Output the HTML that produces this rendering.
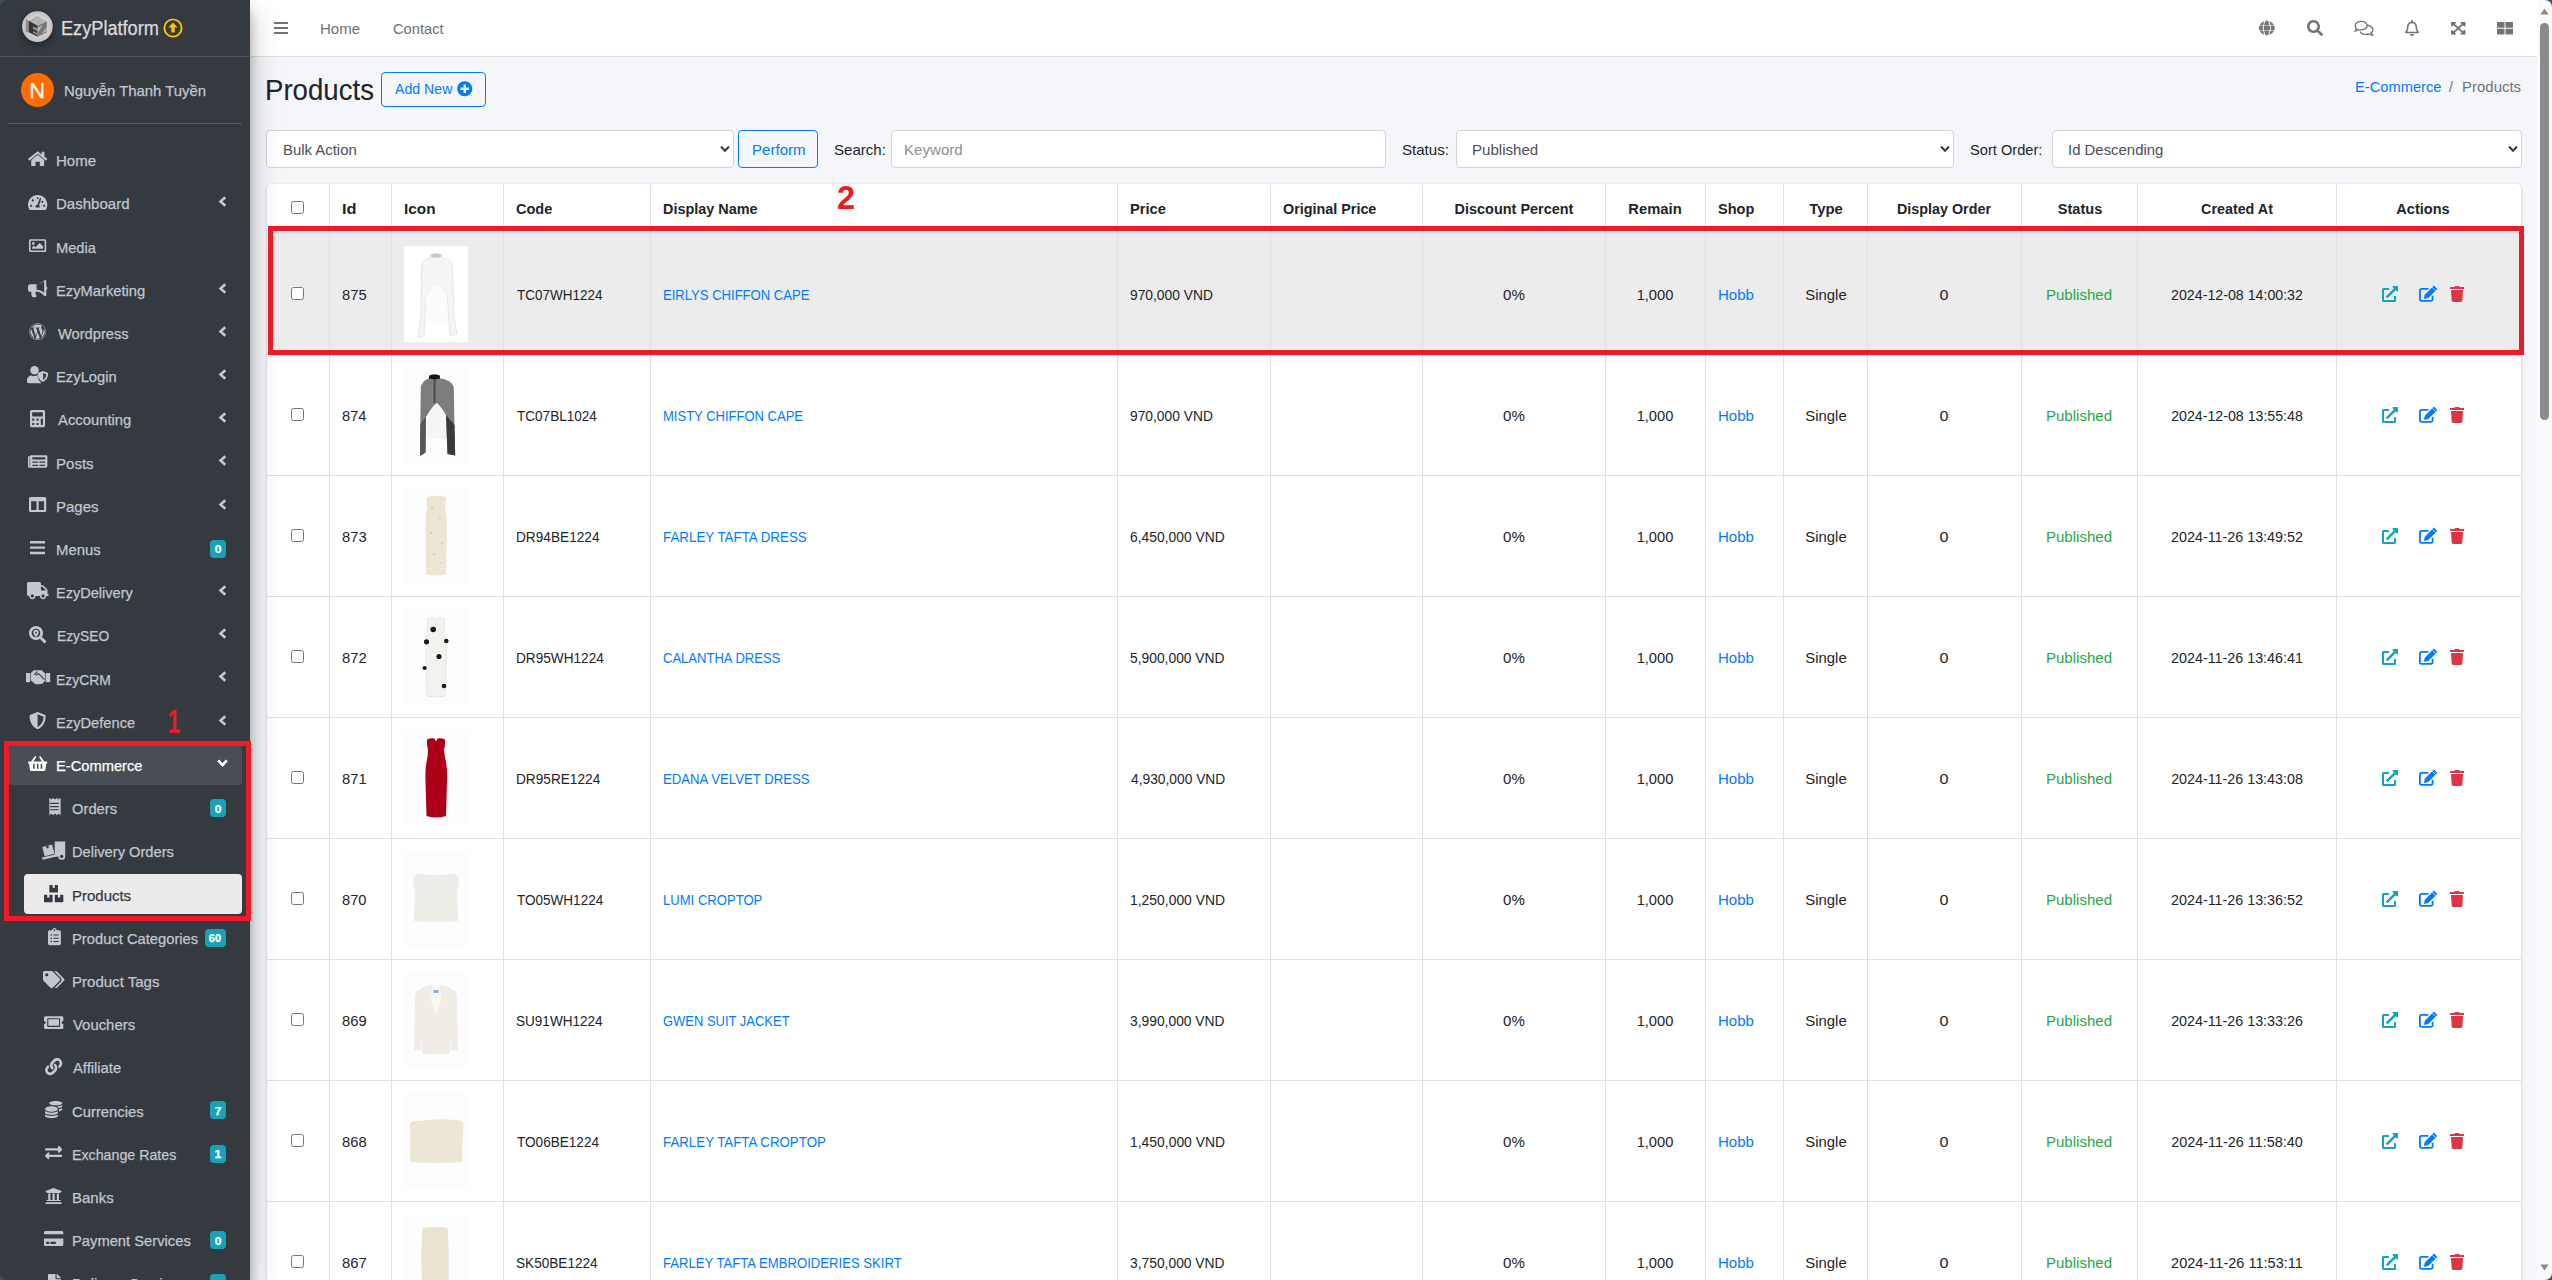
<!DOCTYPE html><html><head><meta charset="utf-8"><title>Products</title><style>
*{box-sizing:border-box}
html,body{margin:0;padding:0}
body{width:2552px;height:1280px;overflow:hidden;position:relative;background:#f4f6f9;font-family:"Liberation Sans",sans-serif;}
.t{position:absolute;white-space:nowrap}
.sb .t{-webkit-text-stroke:0.25px currentColor}
.r{position:absolute}
.ic{position:absolute;overflow:visible}
</style></head><body><div class="r" style="left:250px;top:0px;width:2287px;height:56px;background:#fff;"></div><div class="r" style="left:250px;top:56px;width:2287px;height:1px;background:#dee2e6;"></div><div class="r" style="left:274px;top:22px;width:14px;height:2.2px;background:#737373;"></div><div class="r" style="left:274px;top:27px;width:14px;height:2.2px;background:#737373;"></div><div class="r" style="left:274px;top:32px;width:14px;height:2.2px;background:#737373;"></div><div class="t" style="left:320.30px;top:21.26px;font-size:15.52px;line-height:15.52px;color:#6c7177;transform:scaleX(0.9691);transform-origin:0 0;">Home</div><div class="t" style="left:392.77px;top:21.26px;font-size:15.52px;line-height:15.52px;color:#6c7177;transform:scaleX(0.9467);transform-origin:0 0;">Contact</div><svg class="ic" style="left:2259.35px;top:20.0px;width:15.7px;height:16px;" viewBox="0 0 496 512" preserveAspectRatio="none" fill="#737373"><path d="M336 176C321 83 286 16 248 16s-73 67-88 160h176zM152 256c0 22 1 43 3 64h186c2-21 3-42 3-64s-1-43-3-64H155c-2 21-3 42-3 64zm325-80c-29-69-88-122-161-144 25 35 42 87 51 144h110zM180 32C107 54 48 107 19 176h110c9-57 26-109 51-144zm307 160H370c2 21 3 43 3 64s-1 43-3 64h117c6-20 9-42 9-64s-3-44-9-64zM120 256c0-21 1-43 3-64H9c-6 20-9 42-9 64s3 44 9 64h114c-2-21-3-43-3-64zm40 80c15 93 50 160 88 160s73-67 88-160H160zm156 144c73-22 132-75 161-144H367c-9 57-26 109-51 144zM19 336c29 69 88 122 161 144-25-35-42-87-51-144H19z"/></svg><svg class="ic" style="left:2307.0px;top:20.0px;width:16.0px;height:16px;" viewBox="0 0 512 512" preserveAspectRatio="none" fill="#737373"><path d="M505 442L405 343c-5-5-11-7-17-7h-16c28-35 44-80 44-128C416 93 323 0 208 0S0 93 0 208s93 208 208 208c48 0 93-16 128-44v16c0 6 3 12 7 17l100 100c9 9 25 9 34 0l28-28c9-10 9-25 0-35zM208 336c-71 0-128-57-128-128S137 80 208 80s128 57 128 128-57 128-128 128z"/></svg><svg class="ic" style="left:2353px;top:19px;width:22px;height:18px" viewBox="0 0 22 18"><path d="M8.5 6.6 Q13 5.4 16.6 6.8 Q20 8.3 19.9 10.8 Q19.8 12.8 17.9 14 L19.6 16 Q17 15.9 15.6 15 Q12.5 15.9 9.6 14.8 Q7.6 14 7 12.4" fill="none" stroke="#737373" stroke-width="1.35"/><path d="M8.3 2.4 Q13.5 2.4 14.1 6.6 Q14.1 10.6 8.3 10.9 Q6.8 11 5.3 10.6 Q4 11.8 2.3 12.1 Q3.2 11 3.4 9.6 Q2.3 8.4 2.3 6.6 Q2.6 2.4 8.3 2.4Z" fill="#fff" stroke="#737373" stroke-width="1.35"/></svg><svg class="ic" style="left:2405.0px;top:20.0px;width:14px;height:16px;" viewBox="0 0 448 512" preserveAspectRatio="none" fill="#737373"><path d="M440 367c-19-21-56-52-56-154 0-78-54-140-128-155V37c0-20-16-37-32-37s-32 17-32 37v21C118 73 64 135 64 213c0 102-37 133-56 154-6 6-8 14-8 22 0 16 13 31 32 31h384c19 0 32-15 32-31 0-8-2-16-8-22zM67 372c21-27 44-73 45-158 0-1 0-1 0-2 0-62 50-112 112-112s112 50 112 112c0 1 0 1 0 2 0 85 23 131 45 158H67zM224 512c35 0 64-29 64-64H160c0 35 29 64 64 64z"/></svg><svg class="ic" style="left:2450.75px;top:20.75px;width:14.5px;height:14.5px;" viewBox="0 0 448 512" preserveAspectRatio="none" fill="#737373"><path d="M448 344v112c0 13-11 24-24 24H312c-21 0-32-26-17-41l36-36-107-107-107 107 36 36c15 15 4 41-17 41H24c-13 0-24-11-24-24V344c0-21 26-32 41-17l36 36 107-107L77 149l-36 36C26 200 0 189 0 168V56c0-13 11-24 24-24h112c21 0 32 26 17 41l-36 36 107 107 107-107-36-36c-15-15-4-41 17-41h112c13 0 24 11 24 24v112c0 21-26 32-41 17l-36-36-107 107 107 107 36-36c15-15 41-4 41 17z"/></svg><svg class="ic" style="left:2497.0px;top:20.75px;width:16px;height:14.5px;" viewBox="0 0 512 512" preserveAspectRatio="none" fill="#737373"><path d="M240 32H16C7 32 0 39 0 48v192h240V32zm256 0H272v208h240V48c0-9-7-16-16-16zM0 272v192c0 9 7 16 16 16h224V272H0zm272 208h224c9 0 16-7 16-16V272H272v208z"/></svg><div class="t" style="left:265.49px;top:74.65px;font-size:29.95px;line-height:29.95px;color:#212529;transform:scaleX(0.9223);transform-origin:0 0;-webkit-text-stroke:0.1px currentColor;">Products</div><div class="r" style="left:381px;top:72px;width:105px;height:35px;background:transparent;border:1.2px solid #007bff;border-radius:4px;"></div><div class="t" style="left:395.30px;top:81.26px;font-size:15.52px;line-height:15.52px;color:#007bff;transform:scaleX(0.9106);transform-origin:0 0;">Add New</div><svg class="ic" style="left:457.45px;top:80.85px;width:15.5px;height:15.5px;" viewBox="0 0 512 512" preserveAspectRatio="none" fill="#007bff"><path d="M256 8C119 8 8 119 8 256s111 248 248 248 248-111 248-248S393 8 256 8zm144 276c0 7-5 12-12 12h-92v92c0 7-5 12-12 12h-56c-7 0-12-5-12-12v-92h-92c-7 0-12-5-12-12v-56c0-7 5-12 12-12h92v-92c0-7 5-12 12-12h56c7 0 12 5 12 12v92h92c7 0 12 5 12 12v56z"/></svg><div class="t" style="left:2354.93px;top:79.26px;font-size:15.52px;line-height:15.52px;color:#007bff;transform:scaleX(0.9462);transform-origin:0 0;">E-Commerce</div><div class="t" style="left:2448.80px;top:79.26px;font-size:15.52px;line-height:15.52px;color:#6c757d;transform:scaleX(0.9268);transform-origin:0 0;">/</div><div class="t" style="left:2462.30px;top:79.26px;font-size:15.52px;line-height:15.52px;color:#6c757d;transform:scaleX(0.9653);transform-origin:0 0;">Products</div><div class="r" style="left:266px;top:130px;width:467.5px;height:37.5px;background:#fff;border:1px solid #ced4da;border-radius:4px;"></div><div class="t" style="left:282.61px;top:142.26px;font-size:15.52px;line-height:15.52px;color:#495057;transform:scaleX(0.9608);transform-origin:0 0;">Bulk Action</div><svg class="ic" style="left:720.0px;top:145px;width:10px;height:8px" viewBox="0 0 10 8"><polyline points="1,1.5 5,5.8 9,1.5" fill="none" stroke="#343a40" stroke-width="2"/></svg><div class="r" style="left:738px;top:130px;width:80px;height:37.5px;background:transparent;border:1.2px solid #007bff;border-radius:4px;"></div><div class="t" style="left:751.59px;top:142.26px;font-size:15.52px;line-height:15.52px;color:#007bff;transform:scaleX(0.9729);transform-origin:0 0;">Perform</div><div class="t" style="left:833.92px;top:142.26px;font-size:15.52px;line-height:15.52px;color:#212529;transform:scaleX(0.9697);transform-origin:0 0;">Search:</div><div class="r" style="left:891px;top:130px;width:494.5px;height:37.5px;background:#fff;border:1px solid #ced4da;border-radius:4px;"></div><div class="t" style="left:904.39px;top:142.26px;font-size:15.52px;line-height:15.52px;color:#8a9095;transform:scaleX(0.9730);transform-origin:0 0;">Keyword</div><div class="t" style="left:1401.62px;top:142.26px;font-size:15.52px;line-height:15.52px;color:#212529;transform:scaleX(0.9713);transform-origin:0 0;">Status:</div><div class="r" style="left:1455.5px;top:130px;width:498px;height:37.5px;background:#fff;border:1px solid #ced4da;border-radius:4px;"></div><div class="t" style="left:1472.09px;top:142.26px;font-size:15.52px;line-height:15.52px;color:#495057;transform:scaleX(0.9718);transform-origin:0 0;">Published</div><svg class="ic" style="left:1940.0px;top:145px;width:10px;height:8px" viewBox="0 0 10 8"><polyline points="1,1.5 5,5.8 9,1.5" fill="none" stroke="#343a40" stroke-width="2"/></svg><div class="t" style="left:1969.54px;top:142.26px;font-size:15.52px;line-height:15.52px;color:#212529;transform:scaleX(0.9428);transform-origin:0 0;">Sort Order:</div><div class="r" style="left:2051.5px;top:130px;width:470px;height:37.5px;background:#fff;border:1px solid #ced4da;border-radius:4px;"></div><div class="t" style="left:2067.96px;top:142.26px;font-size:15.52px;line-height:15.52px;color:#495057;transform:scaleX(0.9612);transform-origin:0 0;">Id Descending</div><svg class="ic" style="left:2508.0px;top:145px;width:10px;height:8px" viewBox="0 0 10 8"><polyline points="1,1.5 5,5.8 9,1.5" fill="none" stroke="#343a40" stroke-width="2"/></svg><div class="r" style="left:267px;top:184px;width:2254px;height:1106px;background:#fff;border-radius:4px;box-shadow:0 0 1px rgba(0,0,0,.125),0 1px 3px rgba(0,0,0,.2);"></div><div class="r" style="left:267px;top:234px;width:2254px;height:120px;background:#ececec;"></div><div class="r" style="left:267px;top:232px;width:2254px;height:2px;background:#dee2e6;"></div><div class="r" style="left:267px;top:354px;width:2254px;height:1px;background:#dee2e6;"></div><div class="r" style="left:267px;top:475px;width:2254px;height:1px;background:#dee2e6;"></div><div class="r" style="left:267px;top:596px;width:2254px;height:1px;background:#dee2e6;"></div><div class="r" style="left:267px;top:717px;width:2254px;height:1px;background:#dee2e6;"></div><div class="r" style="left:267px;top:838px;width:2254px;height:1px;background:#dee2e6;"></div><div class="r" style="left:267px;top:959px;width:2254px;height:1px;background:#dee2e6;"></div><div class="r" style="left:267px;top:1080px;width:2254px;height:1px;background:#dee2e6;"></div><div class="r" style="left:267px;top:1201px;width:2254px;height:1px;background:#dee2e6;"></div><div class="r" style="left:267px;top:1322px;width:2254px;height:1px;background:#dee2e6;"></div><div class="r" style="left:329px;top:184px;width:1px;height:1096px;background:#dee2e6;"></div><div class="r" style="left:391px;top:184px;width:1px;height:1096px;background:#dee2e6;"></div><div class="r" style="left:503px;top:184px;width:1px;height:1096px;background:#dee2e6;"></div><div class="r" style="left:650px;top:184px;width:1px;height:1096px;background:#dee2e6;"></div><div class="r" style="left:1117px;top:184px;width:1px;height:1096px;background:#dee2e6;"></div><div class="r" style="left:1270px;top:184px;width:1px;height:1096px;background:#dee2e6;"></div><div class="r" style="left:1422px;top:184px;width:1px;height:1096px;background:#dee2e6;"></div><div class="r" style="left:1605px;top:184px;width:1px;height:1096px;background:#dee2e6;"></div><div class="r" style="left:1705px;top:184px;width:1px;height:1096px;background:#dee2e6;"></div><div class="r" style="left:1783px;top:184px;width:1px;height:1096px;background:#dee2e6;"></div><div class="r" style="left:1867px;top:184px;width:1px;height:1096px;background:#dee2e6;"></div><div class="r" style="left:2021px;top:184px;width:1px;height:1096px;background:#dee2e6;"></div><div class="r" style="left:2137px;top:184px;width:1px;height:1096px;background:#dee2e6;"></div><div class="r" style="left:2336px;top:184px;width:1px;height:1096px;background:#dee2e6;"></div><div class="t" style="left:341.73px;top:201.01px;font-size:15.52px;line-height:15.52px;color:#212529;font-weight:700;transform:scaleX(1.0560);transform-origin:0 0;">Id</div><div class="t" style="left:403.80px;top:201.01px;font-size:15.52px;line-height:15.52px;color:#212529;font-weight:700;transform:scaleX(0.9877);transform-origin:0 0;">Icon</div><div class="t" style="left:516.22px;top:201.01px;font-size:15.52px;line-height:15.52px;color:#212529;font-weight:700;transform:scaleX(0.9344);transform-origin:0 0;">Code</div><div class="t" style="left:662.86px;top:201.01px;font-size:15.52px;line-height:15.52px;color:#212529;font-weight:700;transform:scaleX(0.9286);transform-origin:0 0;">Display Name</div><div class="t" style="left:1129.84px;top:201.01px;font-size:15.52px;line-height:15.52px;color:#212529;font-weight:700;transform:scaleX(0.9478);transform-origin:0 0;">Price</div><div class="t" style="left:1283.23px;top:201.01px;font-size:15.52px;line-height:15.52px;color:#212529;font-weight:700;transform:scaleX(0.9253);transform-origin:0 0;">Original Price</div><div class="t" style="left:513.63px;width:2000px;text-align:center;top:201.01px;font-size:15.52px;line-height:15.52px;color:#212529;font-weight:700;transform:scaleX(0.9308);transform-origin:1000px 0;">Discount Percent</div><div class="t" style="left:655.48px;width:2000px;text-align:center;top:201.01px;font-size:15.52px;line-height:15.52px;color:#212529;font-weight:700;transform:scaleX(0.9520);transform-origin:1000px 0;">Remain</div><div class="t" style="left:1718.36px;top:201.01px;font-size:15.52px;line-height:15.52px;color:#212529;font-weight:700;transform:scaleX(0.9354);transform-origin:0 0;">Shop</div><div class="t" style="left:825.68px;width:2000px;text-align:center;top:201.01px;font-size:15.52px;line-height:15.52px;color:#212529;font-weight:700;transform:scaleX(0.9589);transform-origin:1000px 0;">Type</div><div class="t" style="left:944.13px;width:2000px;text-align:center;top:201.01px;font-size:15.52px;line-height:15.52px;color:#212529;font-weight:700;transform:scaleX(0.9244);transform-origin:1000px 0;">Display Order</div><div class="t" style="left:1079.58px;width:2000px;text-align:center;top:201.01px;font-size:15.52px;line-height:15.52px;color:#212529;font-weight:700;transform:scaleX(0.9378);transform-origin:1000px 0;">Status</div><div class="t" style="left:1236.82px;width:2000px;text-align:center;top:201.01px;font-size:15.52px;line-height:15.52px;color:#212529;font-weight:700;transform:scaleX(0.9221);transform-origin:1000px 0;">Created At</div><div class="t" style="left:1423.12px;width:2000px;text-align:center;top:201.01px;font-size:15.52px;line-height:15.52px;color:#212529;font-weight:700;transform:scaleX(0.9360);transform-origin:1000px 0;">Actions</div><div class="r" style="left:291px;top:201px;width:13px;height:13px;background:#fff;border:1px solid #767676;border-radius:2.5px;"></div><div class="r" style="left:291px;top:287px;width:13px;height:13px;background:#fff;border:1px solid #767676;border-radius:2.5px;"></div><div class="t" style="left:342.14px;top:287.26px;font-size:15.52px;line-height:15.52px;color:#212529;transform:scaleX(0.9500);transform-origin:0 0;">875</div><svg class="ic" style="left:404px;top:246px;width:64px;height:96px" viewBox="0 0 64 96"><rect width="64" height="96" fill="#ffffff"/><path d="M26.8 8.6 Q32 6.8 37.4 8.6 L37.8 11.6 Q47.5 13.5 48.5 20 L50 70 L53 88 L46 90 L43 48 Q37 39 32.5 37 Q28 40 22 50 L20 90 L14 92 L17 70 L17.5 20 Q18.5 13.5 26.4 11.6Z" fill="#f5f5f3" stroke="#d9d9d7" stroke-width="0.6"/><path d="M22 50 Q28 40 32.5 37 Q37 39 43 48 L43.5 78 L22 78Z" fill="#fbfbfa"/><path d="M27.3 8.4 Q32 6.9 36.9 8.4 L37.2 10.9 Q32 12 27 10.9Z" fill="#c6c6c6"/></svg><div class="t" style="left:516.53px;top:287.26px;font-size:15.52px;line-height:15.52px;color:#212529;transform:scaleX(0.8699);transform-origin:0 0;">TC07WH1224</div><div class="t" style="left:662.75px;top:287.26px;font-size:15.52px;line-height:15.52px;color:#007bff;transform:scaleX(0.8421);transform-origin:0 0;">EIRLYS CHIFFON CAPE</div><div class="t" style="left:1130.18px;top:287.26px;font-size:15.52px;line-height:15.52px;color:#212529;transform:scaleX(0.8894);transform-origin:0 0;">970,000 VND</div><div class="t" style="left:513.96px;width:2000px;text-align:center;top:287.26px;font-size:15.52px;line-height:15.52px;color:#212529;transform:scaleX(0.9714);transform-origin:1000px 0;">0%</div><div class="t" style="left:655.22px;width:2000px;text-align:center;top:287.26px;font-size:15.52px;line-height:15.52px;color:#212529;transform:scaleX(0.9459);transform-origin:1000px 0;">1,000</div><div class="t" style="left:1717.60px;top:287.26px;font-size:15.52px;line-height:15.52px;color:#007bff;transform:scaleX(0.9673);transform-origin:0 0;">Hobb</div><div class="t" style="left:825.50px;width:2000px;text-align:center;top:287.26px;font-size:15.52px;line-height:15.52px;color:#212529;transform:scaleX(0.9580);transform-origin:1000px 0;">Single</div><div class="t" style="left:944.47px;width:2000px;text-align:center;top:287.26px;font-size:15.52px;line-height:15.52px;color:#212529;transform:scaleX(1.0423);transform-origin:1000px 0;">0</div><div class="t" style="left:1079.40px;width:2000px;text-align:center;top:287.26px;font-size:15.52px;line-height:15.52px;color:#28a745;transform:scaleX(0.9718);transform-origin:1000px 0;">Published</div><div class="t" style="left:1237.01px;width:2000px;text-align:center;top:287.26px;font-size:15.52px;line-height:15.52px;color:#212529;transform:scaleX(0.9151);transform-origin:1000px 0;">2024-12-08 14:00:32</div><svg class="ic" style="left:2382.0px;top:285.5px;width:16.0px;height:16px;" viewBox="0 0 512 512" preserveAspectRatio="none" fill="#17a2b8"><path d="M432 320h-32a16 16 0 0 0-16 16v112H64V128h144a16 16 0 0 0 16-16V80a16 16 0 0 0-16-16H48a48 48 0 0 0-48 48v352a48 48 0 0 0 48 48h352a48 48 0 0 0 48-48V336a16 16 0 0 0-16-16zM488 0H360c-21 0-32 26-17 41l36 36-244 244a24 24 0 0 0 0 34l23 23a24 24 0 0 0 34 0l244-244 36 36c15 15 41 5 41-17V24a24 24 0 0 0-24-24z"/></svg><svg class="ic" style="left:2419px;top:286px;width:19px;height:17px" viewBox="0 0 19 17"><path d="M9.4 2.9 H2.7 Q0.9 2.9 0.9 4.7 V13.1 Q0.9 14.9 2.7 14.9 H11.8 Q13.6 14.9 13.6 13.1 V9.8" fill="none" stroke="#007bff" stroke-width="1.8"/><path d="M4.9 13 L5.8 8.7 L14.9 -0.4 L18.3 3 L9.2 12.1Z" fill="#007bff"/><path d="M13.4 1.4 L16.5 4.5" stroke="#ececec" stroke-width="0.8"/></svg><svg class="ic" style="left:2450.0px;top:285.5px;width:14px;height:16px;" viewBox="0 0 448 512" preserveAspectRatio="none" fill="#dc3545"><path d="M432 32H312l-9-19A24 24 0 0 0 281 0H167a24 24 0 0 0-21 13l-9 19H16A16 16 0 0 0 0 48v32a16 16 0 0 0 16 16h416a16 16 0 0 0 16-16V48a16 16 0 0 0-16-16zM53 467a48 48 0 0 0 48 45h246a48 48 0 0 0 48-45L416 128H32z"/></svg><div class="r" style="left:291px;top:408px;width:13px;height:13px;background:#fff;border:1px solid #767676;border-radius:2.5px;"></div><div class="t" style="left:342.14px;top:408.26px;font-size:15.52px;line-height:15.52px;color:#212529;transform:scaleX(0.9440);transform-origin:0 0;">874</div><svg class="ic" style="left:404px;top:367px;width:64px;height:96px" viewBox="0 0 64 96"><rect width="64" height="96" fill="#fdfdfd"/><path d="M25.4 8.4 Q30.5 6.8 35.7 8.4 L36 11.2 Q47.5 13 49.8 20 L50.5 62 L51.2 88.5 L43.5 87 L42 48 Q36 38 32.5 36 Q28.5 39 22 50 L21.5 85.5 L16 89 L16.2 62 L16.8 20 Q19 13 25 11.2Z" fill="#7d7d7d"/><path d="M42 48 L43.5 87 L51.2 88.5 L50.5 58Z" fill="#393939"/><path d="M22 50 L21.5 85.5 L16 89 L16.3 57Z" fill="#575757"/><path d="M23 53 Q29 40 32.5 37 Q37 41 41.5 50 L42 72 L23 72Z" fill="#f5f5f5"/><rect x="29.6" y="11" width="2" height="25" fill="#4c4c4c"/><path d="M25.4 8.4 Q30.5 6.8 35.7 8.4 L36 11.6 Q30.5 12.8 25 11.6Z" fill="#151515"/></svg><div class="t" style="left:516.53px;top:408.26px;font-size:15.52px;line-height:15.52px;color:#212529;transform:scaleX(0.8738);transform-origin:0 0;">TC07BL1024</div><div class="t" style="left:662.76px;top:408.26px;font-size:15.52px;line-height:15.52px;color:#007bff;transform:scaleX(0.8386);transform-origin:0 0;">MISTY CHIFFON CAPE</div><div class="t" style="left:1130.18px;top:408.26px;font-size:15.52px;line-height:15.52px;color:#212529;transform:scaleX(0.8894);transform-origin:0 0;">970,000 VND</div><div class="t" style="left:513.96px;width:2000px;text-align:center;top:408.26px;font-size:15.52px;line-height:15.52px;color:#212529;transform:scaleX(0.9714);transform-origin:1000px 0;">0%</div><div class="t" style="left:655.22px;width:2000px;text-align:center;top:408.26px;font-size:15.52px;line-height:15.52px;color:#212529;transform:scaleX(0.9459);transform-origin:1000px 0;">1,000</div><div class="t" style="left:1717.60px;top:408.26px;font-size:15.52px;line-height:15.52px;color:#007bff;transform:scaleX(0.9673);transform-origin:0 0;">Hobb</div><div class="t" style="left:825.50px;width:2000px;text-align:center;top:408.26px;font-size:15.52px;line-height:15.52px;color:#212529;transform:scaleX(0.9580);transform-origin:1000px 0;">Single</div><div class="t" style="left:944.47px;width:2000px;text-align:center;top:408.26px;font-size:15.52px;line-height:15.52px;color:#212529;transform:scaleX(1.0423);transform-origin:1000px 0;">0</div><div class="t" style="left:1079.40px;width:2000px;text-align:center;top:408.26px;font-size:15.52px;line-height:15.52px;color:#28a745;transform:scaleX(0.9718);transform-origin:1000px 0;">Published</div><div class="t" style="left:1236.94px;width:2000px;text-align:center;top:408.26px;font-size:15.52px;line-height:15.52px;color:#212529;transform:scaleX(0.9141);transform-origin:1000px 0;">2024-12-08 13:55:48</div><svg class="ic" style="left:2382.0px;top:406.5px;width:16.0px;height:16px;" viewBox="0 0 512 512" preserveAspectRatio="none" fill="#17a2b8"><path d="M432 320h-32a16 16 0 0 0-16 16v112H64V128h144a16 16 0 0 0 16-16V80a16 16 0 0 0-16-16H48a48 48 0 0 0-48 48v352a48 48 0 0 0 48 48h352a48 48 0 0 0 48-48V336a16 16 0 0 0-16-16zM488 0H360c-21 0-32 26-17 41l36 36-244 244a24 24 0 0 0 0 34l23 23a24 24 0 0 0 34 0l244-244 36 36c15 15 41 5 41-17V24a24 24 0 0 0-24-24z"/></svg><svg class="ic" style="left:2419px;top:407px;width:19px;height:17px" viewBox="0 0 19 17"><path d="M9.4 2.9 H2.7 Q0.9 2.9 0.9 4.7 V13.1 Q0.9 14.9 2.7 14.9 H11.8 Q13.6 14.9 13.6 13.1 V9.8" fill="none" stroke="#007bff" stroke-width="1.8"/><path d="M4.9 13 L5.8 8.7 L14.9 -0.4 L18.3 3 L9.2 12.1Z" fill="#007bff"/><path d="M13.4 1.4 L16.5 4.5" stroke="#fff" stroke-width="0.8"/></svg><svg class="ic" style="left:2450.0px;top:406.5px;width:14px;height:16px;" viewBox="0 0 448 512" preserveAspectRatio="none" fill="#dc3545"><path d="M432 32H312l-9-19A24 24 0 0 0 281 0H167a24 24 0 0 0-21 13l-9 19H16A16 16 0 0 0 0 48v32a16 16 0 0 0 16 16h416a16 16 0 0 0 16-16V48a16 16 0 0 0-16-16zM53 467a48 48 0 0 0 48 45h246a48 48 0 0 0 48-45L416 128H32z"/></svg><div class="r" style="left:291px;top:529px;width:13px;height:13px;background:#fff;border:1px solid #767676;border-radius:2.5px;"></div><div class="t" style="left:342.14px;top:529.26px;font-size:15.52px;line-height:15.52px;color:#212529;transform:scaleX(0.9500);transform-origin:0 0;">873</div><svg class="ic" style="left:404px;top:488px;width:64px;height:96px" viewBox="0 0 64 96"><rect width="64" height="96" fill="#fdfdfd"/><path d="M22.5 9 Q32 6.5 42 9 L41 20 Q43 28 43 40 L42 86 Q32 89 22 86 L21.5 40 Q21.5 28 23 20Z" fill="#ebe6d3"/><g fill="#cdc6ae"><circle cx="28" cy="20" r="1"/><circle cx="36" cy="30" r="0.9"/><circle cx="27" cy="45" r="1"/><circle cx="38" cy="55" r="0.9"/><circle cx="30" cy="66" r="1"/><circle cx="37" cy="75" r="0.8"/></g></svg><div class="t" style="left:515.71px;top:529.26px;font-size:15.52px;line-height:15.52px;color:#212529;transform:scaleX(0.8802);transform-origin:0 0;">DR94BE1224</div><div class="t" style="left:662.73px;top:529.26px;font-size:15.52px;line-height:15.52px;color:#007bff;transform:scaleX(0.8606);transform-origin:0 0;">FARLEY TAFTA DRESS</div><div class="t" style="left:1130.11px;top:529.26px;font-size:15.52px;line-height:15.52px;color:#212529;transform:scaleX(0.8926);transform-origin:0 0;">6,450,000 VND</div><div class="t" style="left:513.96px;width:2000px;text-align:center;top:529.26px;font-size:15.52px;line-height:15.52px;color:#212529;transform:scaleX(0.9714);transform-origin:1000px 0;">0%</div><div class="t" style="left:655.22px;width:2000px;text-align:center;top:529.26px;font-size:15.52px;line-height:15.52px;color:#212529;transform:scaleX(0.9459);transform-origin:1000px 0;">1,000</div><div class="t" style="left:1717.60px;top:529.26px;font-size:15.52px;line-height:15.52px;color:#007bff;transform:scaleX(0.9673);transform-origin:0 0;">Hobb</div><div class="t" style="left:825.50px;width:2000px;text-align:center;top:529.26px;font-size:15.52px;line-height:15.52px;color:#212529;transform:scaleX(0.9580);transform-origin:1000px 0;">Single</div><div class="t" style="left:944.47px;width:2000px;text-align:center;top:529.26px;font-size:15.52px;line-height:15.52px;color:#212529;transform:scaleX(1.0423);transform-origin:1000px 0;">0</div><div class="t" style="left:1079.40px;width:2000px;text-align:center;top:529.26px;font-size:15.52px;line-height:15.52px;color:#28a745;transform:scaleX(0.9718);transform-origin:1000px 0;">Published</div><div class="t" style="left:1237.01px;width:2000px;text-align:center;top:529.26px;font-size:15.52px;line-height:15.52px;color:#212529;transform:scaleX(0.9226);transform-origin:1000px 0;">2024-11-26 13:49:52</div><svg class="ic" style="left:2382.0px;top:527.5px;width:16.0px;height:16px;" viewBox="0 0 512 512" preserveAspectRatio="none" fill="#17a2b8"><path d="M432 320h-32a16 16 0 0 0-16 16v112H64V128h144a16 16 0 0 0 16-16V80a16 16 0 0 0-16-16H48a48 48 0 0 0-48 48v352a48 48 0 0 0 48 48h352a48 48 0 0 0 48-48V336a16 16 0 0 0-16-16zM488 0H360c-21 0-32 26-17 41l36 36-244 244a24 24 0 0 0 0 34l23 23a24 24 0 0 0 34 0l244-244 36 36c15 15 41 5 41-17V24a24 24 0 0 0-24-24z"/></svg><svg class="ic" style="left:2419px;top:528px;width:19px;height:17px" viewBox="0 0 19 17"><path d="M9.4 2.9 H2.7 Q0.9 2.9 0.9 4.7 V13.1 Q0.9 14.9 2.7 14.9 H11.8 Q13.6 14.9 13.6 13.1 V9.8" fill="none" stroke="#007bff" stroke-width="1.8"/><path d="M4.9 13 L5.8 8.7 L14.9 -0.4 L18.3 3 L9.2 12.1Z" fill="#007bff"/><path d="M13.4 1.4 L16.5 4.5" stroke="#fff" stroke-width="0.8"/></svg><svg class="ic" style="left:2450.0px;top:527.5px;width:14px;height:16px;" viewBox="0 0 448 512" preserveAspectRatio="none" fill="#dc3545"><path d="M432 32H312l-9-19A24 24 0 0 0 281 0H167a24 24 0 0 0-21 13l-9 19H16A16 16 0 0 0 0 48v32a16 16 0 0 0 16 16h416a16 16 0 0 0 16-16V48a16 16 0 0 0-16-16zM53 467a48 48 0 0 0 48 45h246a48 48 0 0 0 48-45L416 128H32z"/></svg><div class="r" style="left:291px;top:650px;width:13px;height:13px;background:#fff;border:1px solid #767676;border-radius:2.5px;"></div><div class="t" style="left:342.13px;top:650.26px;font-size:15.52px;line-height:15.52px;color:#212529;transform:scaleX(0.9560);transform-origin:0 0;">872</div><svg class="ic" style="left:404px;top:609px;width:64px;height:96px" viewBox="0 0 64 96"><rect width="64" height="96" fill="#fdfdfd"/><path d="M23.5 9.5 Q27 8 30.5 9 L32 11.5 L33.5 9 Q37 8 40.5 9.5 L40.5 23 Q42.5 30 42.5 40 L41.5 87 Q32 89 22.5 87 L21.5 40 Q21.5 30 23.5 23Z" fill="#f2f2ef" stroke="#dadad6" stroke-width="0.5"/><g fill="#1a1a1a"><circle cx="29.2" cy="20.5" r="2.8"/><circle cx="22.5" cy="32.8" r="2.6"/><circle cx="42.3" cy="32" r="2.3"/><circle cx="35" cy="47.5" r="2.6"/><circle cx="20.6" cy="59" r="2.1"/><circle cx="40" cy="77" r="2.3"/></g></svg><div class="t" style="left:515.71px;top:650.26px;font-size:15.52px;line-height:15.52px;color:#212529;transform:scaleX(0.8775);transform-origin:0 0;">DR95WH1224</div><div class="t" style="left:663.15px;top:650.26px;font-size:15.52px;line-height:15.52px;color:#007bff;transform:scaleX(0.8396);transform-origin:0 0;">CALANTHA DRESS</div><div class="t" style="left:1130.25px;top:650.26px;font-size:15.52px;line-height:15.52px;color:#212529;transform:scaleX(0.8913);transform-origin:0 0;">5,900,000 VND</div><div class="t" style="left:513.96px;width:2000px;text-align:center;top:650.26px;font-size:15.52px;line-height:15.52px;color:#212529;transform:scaleX(0.9714);transform-origin:1000px 0;">0%</div><div class="t" style="left:655.22px;width:2000px;text-align:center;top:650.26px;font-size:15.52px;line-height:15.52px;color:#212529;transform:scaleX(0.9459);transform-origin:1000px 0;">1,000</div><div class="t" style="left:1717.60px;top:650.26px;font-size:15.52px;line-height:15.52px;color:#007bff;transform:scaleX(0.9673);transform-origin:0 0;">Hobb</div><div class="t" style="left:825.50px;width:2000px;text-align:center;top:650.26px;font-size:15.52px;line-height:15.52px;color:#212529;transform:scaleX(0.9580);transform-origin:1000px 0;">Single</div><div class="t" style="left:944.47px;width:2000px;text-align:center;top:650.26px;font-size:15.52px;line-height:15.52px;color:#212529;transform:scaleX(1.0423);transform-origin:1000px 0;">0</div><div class="t" style="left:1079.40px;width:2000px;text-align:center;top:650.26px;font-size:15.52px;line-height:15.52px;color:#28a745;transform:scaleX(0.9718);transform-origin:1000px 0;">Published</div><div class="t" style="left:1236.98px;width:2000px;text-align:center;top:650.26px;font-size:15.52px;line-height:15.52px;color:#212529;transform:scaleX(0.9221);transform-origin:1000px 0;">2024-11-26 13:46:41</div><svg class="ic" style="left:2382.0px;top:648.5px;width:16.0px;height:16px;" viewBox="0 0 512 512" preserveAspectRatio="none" fill="#17a2b8"><path d="M432 320h-32a16 16 0 0 0-16 16v112H64V128h144a16 16 0 0 0 16-16V80a16 16 0 0 0-16-16H48a48 48 0 0 0-48 48v352a48 48 0 0 0 48 48h352a48 48 0 0 0 48-48V336a16 16 0 0 0-16-16zM488 0H360c-21 0-32 26-17 41l36 36-244 244a24 24 0 0 0 0 34l23 23a24 24 0 0 0 34 0l244-244 36 36c15 15 41 5 41-17V24a24 24 0 0 0-24-24z"/></svg><svg class="ic" style="left:2419px;top:649px;width:19px;height:17px" viewBox="0 0 19 17"><path d="M9.4 2.9 H2.7 Q0.9 2.9 0.9 4.7 V13.1 Q0.9 14.9 2.7 14.9 H11.8 Q13.6 14.9 13.6 13.1 V9.8" fill="none" stroke="#007bff" stroke-width="1.8"/><path d="M4.9 13 L5.8 8.7 L14.9 -0.4 L18.3 3 L9.2 12.1Z" fill="#007bff"/><path d="M13.4 1.4 L16.5 4.5" stroke="#fff" stroke-width="0.8"/></svg><svg class="ic" style="left:2450.0px;top:648.5px;width:14px;height:16px;" viewBox="0 0 448 512" preserveAspectRatio="none" fill="#dc3545"><path d="M432 32H312l-9-19A24 24 0 0 0 281 0H167a24 24 0 0 0-21 13l-9 19H16A16 16 0 0 0 0 48v32a16 16 0 0 0 16 16h416a16 16 0 0 0 16-16V48a16 16 0 0 0-16-16zM53 467a48 48 0 0 0 48 45h246a48 48 0 0 0 48-45L416 128H32z"/></svg><div class="r" style="left:291px;top:771px;width:13px;height:13px;background:#fff;border:1px solid #767676;border-radius:2.5px;"></div><div class="t" style="left:342.13px;top:771.26px;font-size:15.52px;line-height:15.52px;color:#212529;transform:scaleX(0.9530);transform-origin:0 0;">871</div><svg class="ic" style="left:404px;top:730px;width:64px;height:96px" viewBox="0 0 64 96"><rect width="64" height="96" fill="#fdfdfd"/><path d="M23 9.5 Q27 7.5 30.5 8.5 L32 11.5 L33.5 8.5 Q37 7.5 41 9.5 Q41.5 14 40 20 Q40.5 26 42 32 Q43.5 40 43 52 L42 86 Q32 89 22.5 86 L21.5 52 Q21 40 22.5 32 Q24 26 24 20 Q22.5 14 23 9.5Z" fill="#ac0019"/></svg><div class="t" style="left:515.71px;top:771.26px;font-size:15.52px;line-height:15.52px;color:#212529;transform:scaleX(0.8797);transform-origin:0 0;">DR95RE1224</div><div class="t" style="left:662.75px;top:771.26px;font-size:15.52px;line-height:15.52px;color:#007bff;transform:scaleX(0.8483);transform-origin:0 0;">EDANA VELVET DRESS</div><div class="t" style="left:1130.52px;top:771.26px;font-size:15.52px;line-height:15.52px;color:#212529;transform:scaleX(0.8887);transform-origin:0 0;">4,930,000 VND</div><div class="t" style="left:513.96px;width:2000px;text-align:center;top:771.26px;font-size:15.52px;line-height:15.52px;color:#212529;transform:scaleX(0.9714);transform-origin:1000px 0;">0%</div><div class="t" style="left:655.22px;width:2000px;text-align:center;top:771.26px;font-size:15.52px;line-height:15.52px;color:#212529;transform:scaleX(0.9459);transform-origin:1000px 0;">1,000</div><div class="t" style="left:1717.60px;top:771.26px;font-size:15.52px;line-height:15.52px;color:#007bff;transform:scaleX(0.9673);transform-origin:0 0;">Hobb</div><div class="t" style="left:825.50px;width:2000px;text-align:center;top:771.26px;font-size:15.52px;line-height:15.52px;color:#212529;transform:scaleX(0.9580);transform-origin:1000px 0;">Single</div><div class="t" style="left:944.47px;width:2000px;text-align:center;top:771.26px;font-size:15.52px;line-height:15.52px;color:#212529;transform:scaleX(1.0423);transform-origin:1000px 0;">0</div><div class="t" style="left:1079.40px;width:2000px;text-align:center;top:771.26px;font-size:15.52px;line-height:15.52px;color:#28a745;transform:scaleX(0.9718);transform-origin:1000px 0;">Published</div><div class="t" style="left:1236.94px;width:2000px;text-align:center;top:771.26px;font-size:15.52px;line-height:15.52px;color:#212529;transform:scaleX(0.9216);transform-origin:1000px 0;">2024-11-26 13:43:08</div><svg class="ic" style="left:2382.0px;top:769.5px;width:16.0px;height:16px;" viewBox="0 0 512 512" preserveAspectRatio="none" fill="#17a2b8"><path d="M432 320h-32a16 16 0 0 0-16 16v112H64V128h144a16 16 0 0 0 16-16V80a16 16 0 0 0-16-16H48a48 48 0 0 0-48 48v352a48 48 0 0 0 48 48h352a48 48 0 0 0 48-48V336a16 16 0 0 0-16-16zM488 0H360c-21 0-32 26-17 41l36 36-244 244a24 24 0 0 0 0 34l23 23a24 24 0 0 0 34 0l244-244 36 36c15 15 41 5 41-17V24a24 24 0 0 0-24-24z"/></svg><svg class="ic" style="left:2419px;top:770px;width:19px;height:17px" viewBox="0 0 19 17"><path d="M9.4 2.9 H2.7 Q0.9 2.9 0.9 4.7 V13.1 Q0.9 14.9 2.7 14.9 H11.8 Q13.6 14.9 13.6 13.1 V9.8" fill="none" stroke="#007bff" stroke-width="1.8"/><path d="M4.9 13 L5.8 8.7 L14.9 -0.4 L18.3 3 L9.2 12.1Z" fill="#007bff"/><path d="M13.4 1.4 L16.5 4.5" stroke="#fff" stroke-width="0.8"/></svg><svg class="ic" style="left:2450.0px;top:769.5px;width:14px;height:16px;" viewBox="0 0 448 512" preserveAspectRatio="none" fill="#dc3545"><path d="M432 32H312l-9-19A24 24 0 0 0 281 0H167a24 24 0 0 0-21 13l-9 19H16A16 16 0 0 0 0 48v32a16 16 0 0 0 16 16h416a16 16 0 0 0 16-16V48a16 16 0 0 0-16-16zM53 467a48 48 0 0 0 48 45h246a48 48 0 0 0 48-45L416 128H32z"/></svg><div class="r" style="left:291px;top:892px;width:13px;height:13px;background:#fff;border:1px solid #767676;border-radius:2.5px;"></div><div class="t" style="left:342.14px;top:892.26px;font-size:15.52px;line-height:15.52px;color:#212529;transform:scaleX(0.9470);transform-origin:0 0;">870</div><svg class="ic" style="left:404px;top:851px;width:64px;height:96px" viewBox="0 0 64 96"><rect width="64" height="96" fill="#fdfdfd"/><path d="M9.5 26 Q12 22.5 18 23 Q32 25 46 23 Q53 22.5 54.5 26 Q55.5 32 53 42 L54.5 70 Q32 72 9.5 70 L11 42 Q8.5 32 9.5 26Z" fill="#efede7"/></svg><div class="t" style="left:516.53px;top:892.26px;font-size:15.52px;line-height:15.52px;color:#212529;transform:scaleX(0.8716);transform-origin:0 0;">TO05WH1224</div><div class="t" style="left:662.75px;top:892.26px;font-size:15.52px;line-height:15.52px;color:#007bff;transform:scaleX(0.8429);transform-origin:0 0;">LUMI CROPTOP</div><div class="t" style="left:1129.76px;top:892.26px;font-size:15.52px;line-height:15.52px;color:#212529;transform:scaleX(0.8959);transform-origin:0 0;">1,250,000 VND</div><div class="t" style="left:513.96px;width:2000px;text-align:center;top:892.26px;font-size:15.52px;line-height:15.52px;color:#212529;transform:scaleX(0.9714);transform-origin:1000px 0;">0%</div><div class="t" style="left:655.22px;width:2000px;text-align:center;top:892.26px;font-size:15.52px;line-height:15.52px;color:#212529;transform:scaleX(0.9459);transform-origin:1000px 0;">1,000</div><div class="t" style="left:1717.60px;top:892.26px;font-size:15.52px;line-height:15.52px;color:#007bff;transform:scaleX(0.9673);transform-origin:0 0;">Hobb</div><div class="t" style="left:825.50px;width:2000px;text-align:center;top:892.26px;font-size:15.52px;line-height:15.52px;color:#212529;transform:scaleX(0.9580);transform-origin:1000px 0;">Single</div><div class="t" style="left:944.47px;width:2000px;text-align:center;top:892.26px;font-size:15.52px;line-height:15.52px;color:#212529;transform:scaleX(1.0423);transform-origin:1000px 0;">0</div><div class="t" style="left:1079.40px;width:2000px;text-align:center;top:892.26px;font-size:15.52px;line-height:15.52px;color:#28a745;transform:scaleX(0.9718);transform-origin:1000px 0;">Published</div><div class="t" style="left:1237.01px;width:2000px;text-align:center;top:892.26px;font-size:15.52px;line-height:15.52px;color:#212529;transform:scaleX(0.9226);transform-origin:1000px 0;">2024-11-26 13:36:52</div><svg class="ic" style="left:2382.0px;top:890.5px;width:16.0px;height:16px;" viewBox="0 0 512 512" preserveAspectRatio="none" fill="#17a2b8"><path d="M432 320h-32a16 16 0 0 0-16 16v112H64V128h144a16 16 0 0 0 16-16V80a16 16 0 0 0-16-16H48a48 48 0 0 0-48 48v352a48 48 0 0 0 48 48h352a48 48 0 0 0 48-48V336a16 16 0 0 0-16-16zM488 0H360c-21 0-32 26-17 41l36 36-244 244a24 24 0 0 0 0 34l23 23a24 24 0 0 0 34 0l244-244 36 36c15 15 41 5 41-17V24a24 24 0 0 0-24-24z"/></svg><svg class="ic" style="left:2419px;top:891px;width:19px;height:17px" viewBox="0 0 19 17"><path d="M9.4 2.9 H2.7 Q0.9 2.9 0.9 4.7 V13.1 Q0.9 14.9 2.7 14.9 H11.8 Q13.6 14.9 13.6 13.1 V9.8" fill="none" stroke="#007bff" stroke-width="1.8"/><path d="M4.9 13 L5.8 8.7 L14.9 -0.4 L18.3 3 L9.2 12.1Z" fill="#007bff"/><path d="M13.4 1.4 L16.5 4.5" stroke="#fff" stroke-width="0.8"/></svg><svg class="ic" style="left:2450.0px;top:890.5px;width:14px;height:16px;" viewBox="0 0 448 512" preserveAspectRatio="none" fill="#dc3545"><path d="M432 32H312l-9-19A24 24 0 0 0 281 0H167a24 24 0 0 0-21 13l-9 19H16A16 16 0 0 0 0 48v32a16 16 0 0 0 16 16h416a16 16 0 0 0 16-16V48a16 16 0 0 0-16-16zM53 467a48 48 0 0 0 48 45h246a48 48 0 0 0 48-45L416 128H32z"/></svg><div class="r" style="left:291px;top:1013px;width:13px;height:13px;background:#fff;border:1px solid #767676;border-radius:2.5px;"></div><div class="t" style="left:342.13px;top:1013.26px;font-size:15.52px;line-height:15.52px;color:#212529;transform:scaleX(0.9530);transform-origin:0 0;">869</div><svg class="ic" style="left:404px;top:972px;width:64px;height:96px" viewBox="0 0 64 96"><rect width="64" height="96" fill="#fdfdfd"/><path d="M22 14 L29 13 L32 20 L35 13 L42 14 L51 19 Q53 22 53 30 L54 78 L47 79 L46 60 L46 82 L18 82 L18 60 L17 79 L10 78 L11 30 Q11 22 13 19Z" fill="#efede5"/><path d="M29 13 L32 20 L35 13 L37.5 28 L32 44 L26.5 28Z" fill="#f8f7f2"/><rect x="29.5" y="18" width="5" height="3" fill="#7fb0e0"/></svg><div class="t" style="left:516.19px;top:1013.26px;font-size:15.52px;line-height:15.52px;color:#212529;transform:scaleX(0.8731);transform-origin:0 0;">SU91WH1224</div><div class="t" style="left:663.15px;top:1013.26px;font-size:15.52px;line-height:15.52px;color:#007bff;transform:scaleX(0.8359);transform-origin:0 0;">GWEN SUIT JACKET</div><div class="t" style="left:1130.25px;top:1013.26px;font-size:15.52px;line-height:15.52px;color:#212529;transform:scaleX(0.8913);transform-origin:0 0;">3,990,000 VND</div><div class="t" style="left:513.96px;width:2000px;text-align:center;top:1013.26px;font-size:15.52px;line-height:15.52px;color:#212529;transform:scaleX(0.9714);transform-origin:1000px 0;">0%</div><div class="t" style="left:655.22px;width:2000px;text-align:center;top:1013.26px;font-size:15.52px;line-height:15.52px;color:#212529;transform:scaleX(0.9459);transform-origin:1000px 0;">1,000</div><div class="t" style="left:1717.60px;top:1013.26px;font-size:15.52px;line-height:15.52px;color:#007bff;transform:scaleX(0.9673);transform-origin:0 0;">Hobb</div><div class="t" style="left:825.50px;width:2000px;text-align:center;top:1013.26px;font-size:15.52px;line-height:15.52px;color:#212529;transform:scaleX(0.9580);transform-origin:1000px 0;">Single</div><div class="t" style="left:944.47px;width:2000px;text-align:center;top:1013.26px;font-size:15.52px;line-height:15.52px;color:#212529;transform:scaleX(1.0423);transform-origin:1000px 0;">0</div><div class="t" style="left:1079.40px;width:2000px;text-align:center;top:1013.26px;font-size:15.52px;line-height:15.52px;color:#28a745;transform:scaleX(0.9718);transform-origin:1000px 0;">Published</div><div class="t" style="left:1236.94px;width:2000px;text-align:center;top:1013.26px;font-size:15.52px;line-height:15.52px;color:#212529;transform:scaleX(0.9216);transform-origin:1000px 0;">2024-11-26 13:33:26</div><svg class="ic" style="left:2382.0px;top:1011.5px;width:16.0px;height:16px;" viewBox="0 0 512 512" preserveAspectRatio="none" fill="#17a2b8"><path d="M432 320h-32a16 16 0 0 0-16 16v112H64V128h144a16 16 0 0 0 16-16V80a16 16 0 0 0-16-16H48a48 48 0 0 0-48 48v352a48 48 0 0 0 48 48h352a48 48 0 0 0 48-48V336a16 16 0 0 0-16-16zM488 0H360c-21 0-32 26-17 41l36 36-244 244a24 24 0 0 0 0 34l23 23a24 24 0 0 0 34 0l244-244 36 36c15 15 41 5 41-17V24a24 24 0 0 0-24-24z"/></svg><svg class="ic" style="left:2419px;top:1012px;width:19px;height:17px" viewBox="0 0 19 17"><path d="M9.4 2.9 H2.7 Q0.9 2.9 0.9 4.7 V13.1 Q0.9 14.9 2.7 14.9 H11.8 Q13.6 14.9 13.6 13.1 V9.8" fill="none" stroke="#007bff" stroke-width="1.8"/><path d="M4.9 13 L5.8 8.7 L14.9 -0.4 L18.3 3 L9.2 12.1Z" fill="#007bff"/><path d="M13.4 1.4 L16.5 4.5" stroke="#fff" stroke-width="0.8"/></svg><svg class="ic" style="left:2450.0px;top:1011.5px;width:14px;height:16px;" viewBox="0 0 448 512" preserveAspectRatio="none" fill="#dc3545"><path d="M432 32H312l-9-19A24 24 0 0 0 281 0H167a24 24 0 0 0-21 13l-9 19H16A16 16 0 0 0 0 48v32a16 16 0 0 0 16 16h416a16 16 0 0 0 16-16V48a16 16 0 0 0-16-16zM53 467a48 48 0 0 0 48 45h246a48 48 0 0 0 48-45L416 128H32z"/></svg><div class="r" style="left:291px;top:1134px;width:13px;height:13px;background:#fff;border:1px solid #767676;border-radius:2.5px;"></div><div class="t" style="left:342.14px;top:1134.26px;font-size:15.52px;line-height:15.52px;color:#212529;transform:scaleX(0.9500);transform-origin:0 0;">868</div><svg class="ic" style="left:404px;top:1093px;width:64px;height:96px" viewBox="0 0 64 96"><rect width="64" height="96" fill="#fdfdfd"/><path d="M6 30 Q8 27 14 28 Q32 25 52 27 Q59 27 59.5 31 L58 60 Q59 67 58 69 Q32 71 7 69 Q6 64 6 58Z" fill="#ece7d4"/></svg><div class="t" style="left:516.53px;top:1134.26px;font-size:15.52px;line-height:15.52px;color:#212529;transform:scaleX(0.8748);transform-origin:0 0;">TO06BE1224</div><div class="t" style="left:662.74px;top:1134.26px;font-size:15.52px;line-height:15.52px;color:#007bff;transform:scaleX(0.8572);transform-origin:0 0;">FARLEY TAFTA CROPTOP</div><div class="t" style="left:1129.76px;top:1134.26px;font-size:15.52px;line-height:15.52px;color:#212529;transform:scaleX(0.8959);transform-origin:0 0;">1,450,000 VND</div><div class="t" style="left:513.96px;width:2000px;text-align:center;top:1134.26px;font-size:15.52px;line-height:15.52px;color:#212529;transform:scaleX(0.9714);transform-origin:1000px 0;">0%</div><div class="t" style="left:655.22px;width:2000px;text-align:center;top:1134.26px;font-size:15.52px;line-height:15.52px;color:#212529;transform:scaleX(0.9459);transform-origin:1000px 0;">1,000</div><div class="t" style="left:1717.60px;top:1134.26px;font-size:15.52px;line-height:15.52px;color:#007bff;transform:scaleX(0.9673);transform-origin:0 0;">Hobb</div><div class="t" style="left:825.50px;width:2000px;text-align:center;top:1134.26px;font-size:15.52px;line-height:15.52px;color:#212529;transform:scaleX(0.9580);transform-origin:1000px 0;">Single</div><div class="t" style="left:944.47px;width:2000px;text-align:center;top:1134.26px;font-size:15.52px;line-height:15.52px;color:#212529;transform:scaleX(1.0423);transform-origin:1000px 0;">0</div><div class="t" style="left:1079.40px;width:2000px;text-align:center;top:1134.26px;font-size:15.52px;line-height:15.52px;color:#28a745;transform:scaleX(0.9718);transform-origin:1000px 0;">Published</div><div class="t" style="left:1236.91px;width:2000px;text-align:center;top:1134.26px;font-size:15.52px;line-height:15.52px;color:#212529;transform:scaleX(0.9287);transform-origin:1000px 0;">2024-11-26 11:58:40</div><svg class="ic" style="left:2382.0px;top:1132.5px;width:16.0px;height:16px;" viewBox="0 0 512 512" preserveAspectRatio="none" fill="#17a2b8"><path d="M432 320h-32a16 16 0 0 0-16 16v112H64V128h144a16 16 0 0 0 16-16V80a16 16 0 0 0-16-16H48a48 48 0 0 0-48 48v352a48 48 0 0 0 48 48h352a48 48 0 0 0 48-48V336a16 16 0 0 0-16-16zM488 0H360c-21 0-32 26-17 41l36 36-244 244a24 24 0 0 0 0 34l23 23a24 24 0 0 0 34 0l244-244 36 36c15 15 41 5 41-17V24a24 24 0 0 0-24-24z"/></svg><svg class="ic" style="left:2419px;top:1133px;width:19px;height:17px" viewBox="0 0 19 17"><path d="M9.4 2.9 H2.7 Q0.9 2.9 0.9 4.7 V13.1 Q0.9 14.9 2.7 14.9 H11.8 Q13.6 14.9 13.6 13.1 V9.8" fill="none" stroke="#007bff" stroke-width="1.8"/><path d="M4.9 13 L5.8 8.7 L14.9 -0.4 L18.3 3 L9.2 12.1Z" fill="#007bff"/><path d="M13.4 1.4 L16.5 4.5" stroke="#fff" stroke-width="0.8"/></svg><svg class="ic" style="left:2450.0px;top:1132.5px;width:14px;height:16px;" viewBox="0 0 448 512" preserveAspectRatio="none" fill="#dc3545"><path d="M432 32H312l-9-19A24 24 0 0 0 281 0H167a24 24 0 0 0-21 13l-9 19H16A16 16 0 0 0 0 48v32a16 16 0 0 0 16 16h416a16 16 0 0 0 16-16V48a16 16 0 0 0-16-16zM53 467a48 48 0 0 0 48 45h246a48 48 0 0 0 48-45L416 128H32z"/></svg><div class="r" style="left:291px;top:1255px;width:13px;height:13px;background:#fff;border:1px solid #767676;border-radius:2.5px;"></div><div class="t" style="left:342.13px;top:1255.26px;font-size:15.52px;line-height:15.52px;color:#212529;transform:scaleX(0.9560);transform-origin:0 0;">867</div><svg class="ic" style="left:404px;top:1214px;width:64px;height:96px" viewBox="0 0 64 96"><rect width="64" height="96" fill="#fdfdfd"/><path d="M18.5 14 Q30 12 43.5 14 Q45 30 44.5 50 L45 96 L18 96 L17.5 50 Q17 30 18.5 14Z" fill="#e9e4d0"/></svg><div class="t" style="left:516.19px;top:1255.26px;font-size:15.52px;line-height:15.52px;color:#212529;transform:scaleX(0.8761);transform-origin:0 0;">SK50BE1224</div><div class="t" style="left:662.75px;top:1255.26px;font-size:15.52px;line-height:15.52px;color:#007bff;transform:scaleX(0.8460);transform-origin:0 0;">FARLEY TAFTA EMBROIDERIES SKIRT</div><div class="t" style="left:1130.25px;top:1255.26px;font-size:15.52px;line-height:15.52px;color:#212529;transform:scaleX(0.8913);transform-origin:0 0;">3,750,000 VND</div><div class="t" style="left:513.96px;width:2000px;text-align:center;top:1255.26px;font-size:15.52px;line-height:15.52px;color:#212529;transform:scaleX(0.9714);transform-origin:1000px 0;">0%</div><div class="t" style="left:655.22px;width:2000px;text-align:center;top:1255.26px;font-size:15.52px;line-height:15.52px;color:#212529;transform:scaleX(0.9459);transform-origin:1000px 0;">1,000</div><div class="t" style="left:1717.60px;top:1255.26px;font-size:15.52px;line-height:15.52px;color:#007bff;transform:scaleX(0.9673);transform-origin:0 0;">Hobb</div><div class="t" style="left:825.50px;width:2000px;text-align:center;top:1255.26px;font-size:15.52px;line-height:15.52px;color:#212529;transform:scaleX(0.9580);transform-origin:1000px 0;">Single</div><div class="t" style="left:944.47px;width:2000px;text-align:center;top:1255.26px;font-size:15.52px;line-height:15.52px;color:#212529;transform:scaleX(1.0423);transform-origin:1000px 0;">0</div><div class="t" style="left:1079.40px;width:2000px;text-align:center;top:1255.26px;font-size:15.52px;line-height:15.52px;color:#28a745;transform:scaleX(0.9718);transform-origin:1000px 0;">Published</div><div class="t" style="left:1236.99px;width:2000px;text-align:center;top:1255.26px;font-size:15.52px;line-height:15.52px;color:#212529;transform:scaleX(0.9375);transform-origin:1000px 0;">2024-11-26 11:53:11</div><svg class="ic" style="left:2382.0px;top:1253.5px;width:16.0px;height:16px;" viewBox="0 0 512 512" preserveAspectRatio="none" fill="#17a2b8"><path d="M432 320h-32a16 16 0 0 0-16 16v112H64V128h144a16 16 0 0 0 16-16V80a16 16 0 0 0-16-16H48a48 48 0 0 0-48 48v352a48 48 0 0 0 48 48h352a48 48 0 0 0 48-48V336a16 16 0 0 0-16-16zM488 0H360c-21 0-32 26-17 41l36 36-244 244a24 24 0 0 0 0 34l23 23a24 24 0 0 0 34 0l244-244 36 36c15 15 41 5 41-17V24a24 24 0 0 0-24-24z"/></svg><svg class="ic" style="left:2419px;top:1254px;width:19px;height:17px" viewBox="0 0 19 17"><path d="M9.4 2.9 H2.7 Q0.9 2.9 0.9 4.7 V13.1 Q0.9 14.9 2.7 14.9 H11.8 Q13.6 14.9 13.6 13.1 V9.8" fill="none" stroke="#007bff" stroke-width="1.8"/><path d="M4.9 13 L5.8 8.7 L14.9 -0.4 L18.3 3 L9.2 12.1Z" fill="#007bff"/><path d="M13.4 1.4 L16.5 4.5" stroke="#fff" stroke-width="0.8"/></svg><svg class="ic" style="left:2450.0px;top:1253.5px;width:14px;height:16px;" viewBox="0 0 448 512" preserveAspectRatio="none" fill="#dc3545"><path d="M432 32H312l-9-19A24 24 0 0 0 281 0H167a24 24 0 0 0-21 13l-9 19H16A16 16 0 0 0 0 48v32a16 16 0 0 0 16 16h416a16 16 0 0 0 16-16V48a16 16 0 0 0-16-16zM53 467a48 48 0 0 0 48 45h246a48 48 0 0 0 48-45L416 128H32z"/></svg><div class="sb" style="position:absolute;left:0;top:0;width:250px;height:1280px;z-index:5"><div class="r" style="left:0px;top:0px;width:250px;height:1280px;background:#343a40;box-shadow:0 14px 28px rgba(0,0,0,.25),0 10px 10px rgba(0,0,0,.22);"></div><div class="r" style="left:0px;top:56px;width:250px;height:1px;background:#4b545c;"></div><div class="r" style="left:8px;top:123px;width:234px;height:1px;background:#4f5962;"></div><div class="r" style="left:22px;top:11px;width:31px;height:31px;border-radius:50%;box-shadow:0 3px 6px rgba(0,0,0,.16),0 3px 6px rgba(0,0,0,.23)"></div><svg class="ic" style="left:16px;top:6px;width:42px;height:42px" viewBox="0 0 42 42"><circle cx="21.4" cy="20.6" r="15.3" fill="#c7c7c7"/><path d="M21.3 7.5 L33.1 14.1 L33.1 28.2 L21.3 32.8 L9.8 26.2 L9.8 13.1Z" fill="#d0d0d0"/><path d="M9.8 13.1 L12.8 14.8 L12.8 26.2 L9.8 26.2Z" fill="#8c8c8c"/><path d="M12.8 14.8 L21.3 9.8 L30.8 15.4 L21.65 19.7Z" fill="#b3b3b3"/><path d="M12.8 14.8 L21.65 19.7 L21.65 30.8 L12.8 26.2Z" fill="#343434"/><path d="M17 20.2 L21.65 22.7 L21.65 25.2 L17 22.7Z M17 24.9 L21.65 27.4 L21.65 29.2 L17 26.8Z" fill="#9a9a9a"/><path d="M21.65 19.7 L30.8 15.4 L30.8 26.2 L21.65 30.8Z" fill="#787878"/><path d="M21.65 21.4 L26.6 19 L21.65 27.2Z M30.8 21.2 L25.8 27.6 L30.8 25.2Z" fill="#b9b9b9"/></svg><div class="t" style="left:61.25px;top:18.98px;font-size:19.4px;line-height:19.4px;color:#dcdcdc;transform:scaleX(0.9366);transform-origin:0 0;">EzyPlatform</div><svg class="ic" style="left:163px;top:17.5px;width:20px;height:20px" viewBox="0 0 20 20"><circle cx="10" cy="10" r="8.6" fill="none" stroke="#ffc107" stroke-width="1.9"/><path d="M10 4.6 L14.6 9.6 L11.7 9.6 L11.7 14.6 L8.3 14.6 L8.3 9.6 L5.4 9.6Z" fill="#ffc107"/></svg><div class="r" style="left:21px;top:73px;width:33px;height:34px;border-radius:50%;background:#ff6c00"></div><div class="t" style="left:-962.68px;width:2000px;text-align:center;top:79.42px;font-size:22.89px;line-height:22.89px;color:#fff;transform:scaleX(0.9518);transform-origin:1000px 0;">N</div><div class="t" style="left:64.01px;top:83.26px;font-size:15.52px;line-height:15.52px;color:#c2c7d0;transform:scaleX(0.9596);transform-origin:0 0;">Nguyễn Thanh Tuyền</div><svg class="ic" style="left:28.12px;top:150.4px;width:19.35px;height:17.2px;" viewBox="0 0 576 512" preserveAspectRatio="none" fill="#c2c7d0"><path d="M280 148L96 300v164c0 9 7 16 16 16h112V352h128v128h112c9 0 16-7 16-16V300L296 148c-5-4-11-4-16 0z"/><path d="M570 260L488 193V64c0-7-5-12-12-12h-56c-7 0-12 5-12 12v67L318 57c-17-14-43-14-60 0L6 260c-5 4-6 12-2 17l26 31c4 5 12 6 17 2L280 118c5-4 11-4 16 0l233 192c5 4 13 3 17-2l25-31c4-5 4-13-1-17z"/></svg><div class="t" style="left:56.40px;top:153.26px;font-size:15.52px;line-height:15.52px;color:#c2c7d0;transform:scaleX(0.9691);transform-origin:0 0;">Home</div><svg class="ic" style="left:28.12px;top:193.6px;width:19.35px;height:17.2px;" viewBox="0 0 576 512" preserveAspectRatio="none" fill="#c2c7d0"><path d="M288 32C129 32 0 161 0 320c0 53 14 102 39 145 6 9 16 15 27 15h444c11 0 21-6 27-15 25-43 39-92 39-145C576 161 447 32 288 32zm0 64c15 0 26 11 28 25l-9 28c-6-2-12-3-19-3s-13 1-19 3l-9-28c2-14 13-25 28-25zM96 384c-18 0-32-14-32-32s14-32 32-32 32 14 32 32-14 32-32 32zm48-160c-18 0-32-14-32-32s14-32 32-32 32 14 32 32-14 32-32 32zm247-74l-61 184c13 12 22 28 22 46 0 9-2 17-5 24H229c-3-7-5-15-5-24 0-34 27-62 61-64l61-184c4-13 17-19 30-15s19 17 15 30zM398 216c6-10 19-16 30-16 18 0 32 14 32 32s-14 32-32 32-32-14-32-32c0-6 1-11 2-16zM480 384c-18 0-32-14-32-32s14-32 32-32 32 14 32 32-14 32-32 32z"/></svg><div class="t" style="left:56.40px;top:196.46px;font-size:15.52px;line-height:15.52px;color:#c2c7d0;transform:scaleX(0.9690);transform-origin:0 0;">Dashboard</div><svg class="ic" style="left:217.5px;top:196.2px;width:9px;height:11px" viewBox="0 0 9 11"><polyline points="7.3,1.2 2.5,5.5 7.3,9.8" fill="none" stroke="#c2c7d0" stroke-width="2.6"/></svg><svg class="ic" style="left:29.2px;top:236.8px;width:17.2px;height:17.2px;" viewBox="0 0 512 512" preserveAspectRatio="none" fill="#c2c7d0"><path d="M464 64H48C21 64 0 85 0 112v288c0 27 21 48 48 48h416c27 0 48-21 48-48V112c0-27-21-48-48-48zm-6 336H54c-3 0-6-3-6-6V118c0-3 3-6 6-6h404c3 0 6 3 6 6v276c0 3-3 6-6 6zM128 152c-22 0-40 18-40 40s18 40 40 40 40-18 40-40-18-40-40-40zM96 352h320v-80l-88-88c-5-5-12-5-17 0L192 304l-40-40c-5-5-12-5-17 0L96 304v48z"/></svg><div class="t" style="left:56.43px;top:239.66px;font-size:15.52px;line-height:15.52px;color:#c2c7d0;transform:scaleX(0.9453);transform-origin:0 0;">Media</div><svg class="ic" style="left:28.12px;top:280.0px;width:19.35px;height:17.2px;" viewBox="0 0 576 512" preserveAspectRatio="none" fill="#c2c7d0"><path d="M576 240c0-24-13-44-32-55V32c0-9-7-32-32-32-7 0-14 2-20 7l-85 68C364 109 312 128 256 128H64c-35 0-64 29-64 64v96c0 35 29 64 64 64h34c-1 10-2 21-2 32 0 40 9 77 25 111 5 11 17 17 29 17h74c26 0 42-30 26-51-16-22-26-49-26-77 0-11 2-22 5-32h29c56 0 108 19 151 53l85 68c6 5 13 7 20 7 25 0 32-22 32-32V295c19-11 32-31 32-55zm-96 141l-33-27c-54-43-122-67-191-67v-160c69 0 137-24 191-67l33-27v348z"/></svg><div class="t" style="left:56.42px;top:282.86px;font-size:15.52px;line-height:15.52px;color:#c2c7d0;transform:scaleX(0.9491);transform-origin:0 0;">EzyMarketing</div><svg class="ic" style="left:217.5px;top:282.6px;width:9px;height:11px" viewBox="0 0 9 11"><polyline points="7.3,1.2 2.5,5.5 7.3,9.8" fill="none" stroke="#c2c7d0" stroke-width="2.6"/></svg><svg class="ic" style="left:29.2px;top:323.2px;width:17.2px;height:17.2px;" viewBox="0 0 512 512" preserveAspectRatio="none" fill="#c2c7d0"><path d="M61.7 169.4l101.5 278C92.2 413 43.3 340.2 43.3 256c0-30.9 6.6-60.1 18.4-86.6zm337.9 75.9c0-26.3-9.4-44.5-17.5-58.7-10.8-17.5-20.9-32.4-20.9-49.9 0-19.6 14.8-37.8 35.7-37.8.9 0 1.8.1 2.8.2-37.9-34.7-88.3-55.9-143.7-55.9-74.3 0-139.7 38.1-177.8 95.9 5 .2 9.7.3 13.7.3 22.2 0 56.7-2.7 56.7-2.7 11.5-.7 12.8 16.2 1.4 17.5 0 0-11.5 1.3-24.3 2l77.5 230.4L249.8 247l-33.1-90.8c-11.5-.7-22.3-2-22.3-2-11.5-.7-10.1-18.2 1.3-17.5 0 0 35.1 2.7 56 2.7 22.2 0 56.7-2.7 56.7-2.7 11.5-.7 12.8 16.2 1.4 17.5 0 0-11.5 1.3-24.3 2l76.9 228.7 21.2-70.9c9-29.4 16-50.5 16-68.7zm-139.9 29.3l-63.8 185.5c19.1 5.6 39.2 8.7 60.1 8.7 24.8 0 48.5-4.3 70.6-12.1-.6-.9-1.1-1.9-1.5-2.9l-65.4-179.2zm183-120.7c.9 6.8 1.4 14 1.4 21.9 0 21.6-4 45.8-16.2 76.2l-65 187.9C426.2 403 468.7 334.5 468.7 256c0-37-9.4-71.8-26-102.1zM504 256c0 136.8-111.3 248-248 248C119.2 504 8 392.7 8 256 8 119.2 119.2 8 256 8c136.7 0 248 111.2 248 248zm-11.4 0c0-130.5-106.2-236.6-236.6-236.6C125.5 19.4 19.4 125.5 19.4 256S125.6 492.6 256 492.6c130.5 0 236.6-106.1 236.6-236.6z"/></svg><div class="t" style="left:57.53px;top:326.06px;font-size:15.52px;line-height:15.52px;color:#c2c7d0;transform:scaleX(0.9449);transform-origin:0 0;">Wordpress</div><svg class="ic" style="left:217.5px;top:325.8px;width:9px;height:11px" viewBox="0 0 9 11"><polyline points="7.3,1.2 2.5,5.5 7.3,9.8" fill="none" stroke="#c2c7d0" stroke-width="2.6"/></svg><svg class="ic" style="left:27.05px;top:366.4px;width:21.5px;height:17.2px;" viewBox="0 0 640 512" preserveAspectRatio="none" fill="#c2c7d0"><path d="M622 204l-128-50c-4-2-10-3-14-3s-10 1-14 3l-128 50c-12 5-20 16-20 28 0 124 77 210 148 238 4 2 10 2 14 0 57-22 148-99 148-238 0-12-8-23-20-28zM480 418V206l96 38c-6 96-64 151-96 174zm-256-162c71 0 128-57 128-128S295 0 224 0 96 57 96 128s57 128 128 128zm96 40c0-3 1-5 1-8-8-1-17-2-26-2h-17c-22 10-47 16-74 16s-51-6-74-16h-17C60 288 0 348 0 422v42c0 26 21 48 48 48h352c10 0 19-3 27-9-59-47-107-126-107-207z"/></svg><div class="t" style="left:56.42px;top:369.26px;font-size:15.52px;line-height:15.52px;color:#c2c7d0;transform:scaleX(0.9524);transform-origin:0 0;">EzyLogin</div><svg class="ic" style="left:217.5px;top:369.0px;width:9px;height:11px" viewBox="0 0 9 11"><polyline points="7.3,1.2 2.5,5.5 7.3,9.8" fill="none" stroke="#c2c7d0" stroke-width="2.6"/></svg><svg class="ic" style="left:30.27px;top:409.6px;width:15.05px;height:17.2px;" viewBox="0 0 448 512" preserveAspectRatio="none" fill="#c2c7d0"><path d="M400 0H48C22 0 0 22 0 48v416c0 26 22 48 48 48h352c26 0 48-22 48-48V48c0-26-22-48-48-48zM128 435c0 7-6 13-13 13H77c-7 0-13-6-13-13v-38c0-7 6-13 13-13h38c7 0 13 6 13 13v38zm0-128c0 7-6 13-13 13H77c-7 0-13-6-13-13v-38c0-7 6-13 13-13h38c7 0 13 6 13 13v38zm128 128c0 7-6 13-13 13h-38c-7 0-13-6-13-13v-38c0-7 6-13 13-13h38c7 0 13 6 13 13v38zm0-128c0 7-6 13-13 13h-38c-7 0-13-6-13-13v-38c0-7 6-13 13-13h38c7 0 13 6 13 13v38zm128 128c0 7-6 13-13 13h-38c-7 0-13-6-13-13V269c0-7 6-13 13-13h38c7 0 13 6 13 13v166zm0-256c0 7-6 13-13 13H77c-7 0-13-6-13-13V77c0-7 6-13 13-13h294c7 0 13 6 13 13v102z"/></svg><div class="t" style="left:57.60px;top:412.46px;font-size:15.52px;line-height:15.52px;color:#c2c7d0;transform:scaleX(0.9547);transform-origin:0 0;">Accounting</div><svg class="ic" style="left:217.5px;top:412.2px;width:9px;height:11px" viewBox="0 0 9 11"><polyline points="7.3,1.2 2.5,5.5 7.3,9.8" fill="none" stroke="#c2c7d0" stroke-width="2.6"/></svg><svg class="ic" style="left:28.12px;top:452.8px;width:19.35px;height:17.2px;" viewBox="0 0 576 512" preserveAspectRatio="none" fill="#c2c7d0"><path d="M552 64H88c-13 0-24 11-24 24v8H24c-13 0-24 11-24 24v272c0 26 22 48 48 48h472c31 0 56-25 56-56V88c0-13-11-24-24-24zM56 400a8 8 0 0 1-8-8V144h16v248a8 8 0 0 1-8 8zm236-16H140c-7 0-12-5-12-12v-8c0-7 5-12 12-12h152c7 0 12 5 12 12v8c0 7-5 12-12 12zm208 0H348c-7 0-12-5-12-12v-8c0-7 5-12 12-12h152c7 0 12 5 12 12v8c0 7-5 12-12 12zm-208-96H140c-7 0-12-5-12-12v-8c0-7 5-12 12-12h152c7 0 12 5 12 12v8c0 7-5 12-12 12zm208 0H348c-7 0-12-5-12-12v-8c0-7 5-12 12-12h152c7 0 12 5 12 12v8c0 7-5 12-12 12zm0-96H140c-7 0-12-5-12-12v-40c0-7 5-12 12-12h360c7 0 12 5 12 12v40c0 7-5 12-12 12z"/></svg><div class="t" style="left:56.40px;top:455.66px;font-size:15.52px;line-height:15.52px;color:#c2c7d0;transform:scaleX(0.9683);transform-origin:0 0;">Posts</div><svg class="ic" style="left:217.5px;top:455.4px;width:9px;height:11px" viewBox="0 0 9 11"><polyline points="7.3,1.2 2.5,5.5 7.3,9.8" fill="none" stroke="#c2c7d0" stroke-width="2.6"/></svg><svg class="ic" style="left:29.2px;top:496.0px;width:17.2px;height:17.2px;" viewBox="0 0 512 512" preserveAspectRatio="none" fill="#c2c7d0"><path d="M464 32H48C21 32 0 53 0 80v352c0 27 21 48 48 48h416c27 0 48-21 48-48V80c0-27-21-48-48-48zM224 416H64V160h160v256zm224 0H288V160h160v256z"/></svg><div class="t" style="left:56.40px;top:498.86px;font-size:15.52px;line-height:15.52px;color:#c2c7d0;transform:scaleX(0.9671);transform-origin:0 0;">Pages</div><svg class="ic" style="left:217.5px;top:498.6px;width:9px;height:11px" viewBox="0 0 9 11"><polyline points="7.3,1.2 2.5,5.5 7.3,9.8" fill="none" stroke="#c2c7d0" stroke-width="2.6"/></svg><svg class="ic" style="left:30.27px;top:539.2px;width:15.05px;height:17.2px;" viewBox="0 0 448 512" preserveAspectRatio="none" fill="#c2c7d0"><path d="M16 132h416c9 0 16-7 16-16V76c0-9-7-16-16-16H16C7 60 0 67 0 76v40c0 9 7 16 16 16zm0 160h416c9 0 16-7 16-16v-40c0-9-7-16-16-16H16c-9 0-16 7-16 16v40c0 9 7 16 16 16zm0 160h416c9 0 16-7 16-16v-40c0-9-7-16-16-16H16c-9 0-16 7-16 16v40c0 9 7 16 16 16z"/></svg><div class="t" style="left:56.41px;top:542.06px;font-size:15.52px;line-height:15.52px;color:#c2c7d0;transform:scaleX(0.9591);transform-origin:0 0;">Menus</div><div class="r" style="left:209.8px;top:539.8px;width:16.2px;height:18px;background:#17a2b8;border-radius:4px;"></div><div class="t" style="left:-782.09px;width:2000px;text-align:center;top:543.35px;font-size:11.64px;line-height:11.64px;color:#fff;font-weight:700;transform:scaleX(1.0373);transform-origin:1000px 0;">0</div><svg class="ic" style="left:27.05px;top:582.4px;width:21.5px;height:17.2px;" viewBox="0 0 640 512" preserveAspectRatio="none" fill="#c2c7d0"><path d="M624 352h-16V244c0-13-5-25-14-34L494 110c-9-9-21-14-34-14h-44V48c0-26-22-48-48-48H48C22 0 0 22 0 48v320c0 26 22 48 48 48h16c0 53 43 96 96 96s96-43 96-96h128c0 53 43 96 96 96s96-43 96-96h48c9 0 16-7 16-16v-32c0-9-7-16-16-16zM160 464c-26 0-48-22-48-48s22-48 48-48 48 22 48 48-22 48-48 48zm320 0c-26 0-48-22-48-48s22-48 48-48 48 22 48 48-22 48-48 48zm80-208H416V144h44l100 100v12z"/></svg><div class="t" style="left:56.44px;top:585.26px;font-size:15.52px;line-height:15.52px;color:#c2c7d0;transform:scaleX(0.9379);transform-origin:0 0;">EzyDelivery</div><svg class="ic" style="left:217.5px;top:585.0px;width:9px;height:11px" viewBox="0 0 9 11"><polyline points="7.3,1.2 2.5,5.5 7.3,9.8" fill="none" stroke="#c2c7d0" stroke-width="2.6"/></svg><svg class="ic" style="left:29.2px;top:625.6px;width:17.2px;height:17.2px;" viewBox="0 0 512 512" preserveAspectRatio="none" fill="#c2c7d0"><path d="M505 442L405 343c-5-5-11-7-17-7h-16c28-35 44-80 44-128C416 93 323 0 208 0S0 93 0 208s93 208 208 208c48 0 93-16 128-44v16c0 6 3 12 7 17l100 100c9 9 25 9 34 0l28-28c9-10 9-25 0-35zM208 336c-71 0-128-57-128-128S137 80 208 80s128 57 128 128-57 128-128 128zm0-224c-46 0-84 37-84 83 0 37 54 104 75 128 5 5 13 5 18 0 21-24 75-91 75-128 0-46-38-83-84-83zm0 112c-16 0-28-13-28-28s12-28 28-28 28 13 28 28-12 28-28 28z"/></svg><div class="t" style="left:56.50px;top:628.46px;font-size:15.52px;line-height:15.52px;color:#c2c7d0;transform:scaleX(0.8889);transform-origin:0 0;">EzySEO</div><svg class="ic" style="left:217.5px;top:628.2px;width:9px;height:11px" viewBox="0 0 9 11"><polyline points="7.3,1.2 2.5,5.5 7.3,9.8" fill="none" stroke="#c2c7d0" stroke-width="2.6"/></svg><svg class="ic" style="left:25.9px;top:670.3px;width:24.2px;height:14.2px;" viewBox="0 0 24 14" preserveAspectRatio="none" fill="#c2c7d0"><rect x="0" y="3" width="4" height="9"/><rect x="19.6" y="3" width="4.4" height="9"/><path d="M4.6 3.2 L7.6 0.2 H15.6 L19 3.4 V10.4 L16.6 13.2 L13.6 14 H9.4 L4.6 10Z"/><path d="M8.2 4.6 L11.2 1.6 M9.6 5.2 L12.6 3.6 L18.4 9.6" fill="none" stroke="#343a40" stroke-width="1.1"/></svg><div class="t" style="left:56.49px;top:671.66px;font-size:15.52px;line-height:15.52px;color:#c2c7d0;transform:scaleX(0.8943);transform-origin:0 0;">EzyCRM</div><svg class="ic" style="left:217.5px;top:671.4px;width:9px;height:11px" viewBox="0 0 9 11"><polyline points="7.3,1.2 2.5,5.5 7.3,9.8" fill="none" stroke="#c2c7d0" stroke-width="2.6"/></svg><svg class="ic" style="left:29.2px;top:712.0px;width:17.2px;height:17.2px;" viewBox="0 0 512 512" preserveAspectRatio="none" fill="#c2c7d0"><path d="M466 84L274 4c-6-2-12-4-18-4s-13 2-18 4L46 84C28 91 16 108 16 128c0 198 115 335 222 380 12 5 25 5 37 0 86-36 221-159 221-380 0-20-12-37-30-44zM256 444V64l177 74c-3 152-82 256-177 306z"/></svg><div class="t" style="left:56.42px;top:714.86px;font-size:15.52px;line-height:15.52px;color:#c2c7d0;transform:scaleX(0.9468);transform-origin:0 0;">EzyDefence</div><svg class="ic" style="left:217.5px;top:714.6px;width:9px;height:11px" viewBox="0 0 9 11"><polyline points="7.3,1.2 2.5,5.5 7.3,9.8" fill="none" stroke="#c2c7d0" stroke-width="2.6"/></svg><div class="r" style="left:8px;top:745.3000000000001px;width:234px;height:39.5px;background:rgba(255,255,255,.1);border-radius:4px;"></div><svg class="ic" style="left:28.12px;top:755.2px;width:19.35px;height:17.2px;" viewBox="0 0 576 512" preserveAspectRatio="none" fill="#fff"><path d="M576 216v16c0 13-11 24-24 24h-8l-26 182c-3 24-24 42-48 42H106c-24 0-44-18-48-42L32 256h-8c-13 0-24-11-24-24v-16c0-13 11-24 24-24h67L198 45c8-11 23-13 34-5 11 8 13 23 5 34l-77 118h256L339 74c-8-11-6-26 5-34s26-6 34 5l107 147h67c13 0 24 11 24 24zM312 392V280c0-13-11-24-24-24s-24 11-24 24v112c0 13 11 24 24 24s24-11 24-24zm112 0V280c0-13-11-24-24-24s-24 11-24 24v112c0 13 11 24 24 24s24-11 24-24zm-224 0V280c0-13-11-24-24-24s-24 11-24 24v112c0 13 11 24 24 24s24-11 24-24z"/></svg><div class="t" style="left:56.43px;top:758.06px;font-size:15.52px;line-height:15.52px;color:#fff;transform:scaleX(0.9462);transform-origin:0 0;">E-Commerce</div><svg class="ic" style="left:216.5px;top:759.3px;width:11px;height:8.5px" viewBox="0 0 11 8.5"><polyline points="1.2,1.4 5.5,6 9.8,1.4" fill="none" stroke="#fff" stroke-width="2.6"/></svg><svg class="ic" style="left:47.55px;top:798.4px;width:12.9px;height:17.2px;" viewBox="0 0 384 512" preserveAspectRatio="none" fill="#c2c7d0"><path d="M358 2L320 48 271 4c-4-4-10-4-14 0L208 48 159 4c-4-4-10-4-14 0L96 48 58 2C51-3 40 1 40 10v492c0 9 11 13 18 8l38-46 49 44c4 4 10 4 14 0l49-44 49 44c4 4 10 4 14 0l49-44 38 46c7 5 18 1 18-8V10c0-9-11-13-18-8zM320 360c0 4-4 8-8 8H72c-4 0-8-4-8-8v-16c0-4 4-8 8-8h240c4 0 8 4 8 8v16zm0-96c0 4-4 8-8 8H72c-4 0-8-4-8-8v-16c0-4 4-8 8-8h240c4 0 8 4 8 8v16zm0-96c0 4-4 8-8 8H72c-4 0-8-4-8-8v-16c0-4 4-8 8-8h240c4 0 8 4 8 8v16z"/></svg><div class="t" style="left:72.44px;top:801.26px;font-size:15.52px;line-height:15.52px;color:#c2c7d0;transform:scaleX(0.9503);transform-origin:0 0;">Orders</div><div class="r" style="left:209.8px;top:799.0px;width:16.2px;height:18px;background:#17a2b8;border-radius:4px;"></div><div class="t" style="left:-782.09px;width:2000px;text-align:center;top:802.55px;font-size:11.64px;line-height:11.64px;color:#fff;font-weight:700;transform:scaleX(1.0373);transform-origin:1000px 0;">0</div><svg class="ic" style="left:42.0px;top:840.6px;width:23.6px;height:19.2px;" viewBox="0 0 24 20" preserveAspectRatio="none" fill="#c2c7d0"><path d="M0.3 6.2 L10.2 3.6 L12.6 13.2 L2.7 15.8Z"/><path d="M4 5.2 L6.4 4.6 L6.9 7 L5.6 7.9 L4.5 7.4Z" fill="#343a40"/><path d="M12.9 0.6 H23.6 V16.4 Q23.6 19.6 20.2 19.6 Q16.6 19.6 16.6 16.2 L12.9 16.2Z"/><circle cx="20" cy="16" r="1.7" fill="#343a40"/><path d="M0 17.3 L15.3 13.5 L15.9 15.8 L0.6 19.6Z"/></svg><div class="t" style="left:71.93px;top:844.46px;font-size:15.52px;line-height:15.52px;color:#c2c7d0;transform:scaleX(0.9451);transform-origin:0 0;">Delivery Orders</div><div class="r" style="left:24px;top:873.9000000000001px;width:218px;height:40px;background:rgba(255,255,255,.9);border-radius:4px;"></div><svg class="ic" style="left:44.33px;top:884.8px;width:19.35px;height:17.2px;" viewBox="0 0 576 512" preserveAspectRatio="none" fill="#343a40"><path d="M560 288h-80v96l-32-21-32 21v-96h-80c-9 0-16 7-16 16v192c0 9 7 16 16 16h224c9 0 16-7 16-16V304c0-9-7-16-16-16zm-384-64h224c9 0 16-7 16-16V16c0-9-7-16-16-16h-80v96l-32-21-32 21V0h-80c-9 0-16 7-16 16v192c0 9 7 16 16 16zm64 64h-80v96l-32-21-32 21v-96H16c-9 0-16 7-16 16v192c0 9 7 16 16 16h224c9 0 16-7 16-16V304c0-9-7-16-16-16z"/></svg><div class="t" style="left:71.90px;top:887.66px;font-size:15.52px;line-height:15.52px;color:#343a40;transform:scaleX(0.9653);transform-origin:0 0;">Products</div><svg class="ic" style="left:47.55px;top:928.0px;width:12.9px;height:17.2px;" viewBox="0 0 384 512" preserveAspectRatio="none" fill="#c2c7d0"><path d="M336 64h-80c0-35-29-64-64-64s-64 29-64 64H48C22 64 0 86 0 112v352c0 26 22 48 48 48h288c26 0 48-22 48-48V112c0-26-22-48-48-48zM96 424c-13 0-24-11-24-24s11-24 24-24 24 11 24 24-11 24-24 24zm0-96c-13 0-24-11-24-24s11-24 24-24 24 11 24 24-11 24-24 24zm0-96c-13 0-24-11-24-24s11-24 24-24 24 11 24 24-11 24-24 24zm96-192c13 0 24 11 24 24s-11 24-24 24-24-11-24-24 11-24 24-24zm128 368c0 4-4 8-8 8H168c-4 0-8-4-8-8v-16c0-4 4-8 8-8h144c4 0 8 4 8 8v16zm0-96c0 4-4 8-8 8H168c-4 0-8-4-8-8v-16c0-4 4-8 8-8h144c4 0 8 4 8 8v16zm0-96c0 4-4 8-8 8H168c-4 0-8-4-8-8v-16c0-4 4-8 8-8h144c4 0 8 4 8 8v16z"/></svg><div class="t" style="left:71.92px;top:930.86px;font-size:15.52px;line-height:15.52px;color:#c2c7d0;transform:scaleX(0.9497);transform-origin:0 0;">Product Categories</div><div class="r" style="left:204.6px;top:928.6px;width:21.4px;height:18px;background:#17a2b8;border-radius:4px;"></div><div class="t" style="left:-784.66px;width:2000px;text-align:center;top:932.15px;font-size:11.64px;line-height:11.64px;color:#fff;font-weight:700;transform:scaleX(0.9521);transform-origin:1000px 0;">60</div><svg class="ic" style="left:43.25px;top:971.2px;width:21.5px;height:17.2px;" viewBox="0 0 640 512" preserveAspectRatio="none" fill="#c2c7d0"><path d="M497 225L287 14c-9-9-21-14-34-14H48C22 0 0 22 0 48v205c0 13 5 25 14 34l210 210c19 19 49 19 68 0l205-205c19-19 19-49 0-67zM112 160c-27 0-48-21-48-48s21-48 48-48 48 21 48 48-21 48-48 48zm513 133L420 498c-19 19-49 19-68 0l0 0 175-175c16-16 25-38 25-61s-9-44-25-61L330 4h49c13 0 25 5 34 14l212 211c19 19 19 49 0 67z"/></svg><div class="t" style="left:71.90px;top:974.06px;font-size:15.52px;line-height:15.52px;color:#c2c7d0;transform:scaleX(0.9688);transform-origin:0 0;">Product Tags</div><svg class="ic" style="left:44.33px;top:1014.4px;width:19.35px;height:17.2px;" viewBox="0 0 576 512" preserveAspectRatio="none" fill="#c2c7d0"><path d="M128 160h320v192H128V160zm400 96c0 27 21 48 48 48v96c0 27-21 48-48 48H48c-27 0-48-21-48-48v-96c27 0 48-21 48-48s-21-48-48-48v-96c0-27 21-48 48-48h480c27 0 48 21 48 48v96c-27 0-48 21-48 48zm-48-104c0-13-11-24-24-24H120c-13 0-24 11-24 24v208c0 13 11 24 24 24h336c13 0 24-11 24-24V152z"/></svg><div class="t" style="left:73.03px;top:1017.26px;font-size:15.52px;line-height:15.52px;color:#c2c7d0;transform:scaleX(0.9599);transform-origin:0 0;">Vouchers</div><svg class="ic" style="left:45.4px;top:1057.6px;width:17.2px;height:17.2px;" viewBox="0 0 512 512" preserveAspectRatio="none" fill="#c2c7d0"><path d="M327 185c60 60 59 156 0 214l0 0-67 67c-59 59-155 59-214 0-59-59-59-155 0-214l37-37c10-10 27-3 27 11 1 18 4 36 10 53 2 6 0 12-4 16l-13 13c-28 28-29 74-1 102 28 29 75 29 103 1l67-67c28-28 28-74 0-102-4-4-7-6-10-8-4-3-7-8-7-13 0-10 3-21 11-29l21-21c6-6 14-6 20-2 9 6 17 13 25 20zm140-140c-59-59-155-59-214 0l-67 67 0 0c-59 59-60 154 0 214 8 7 16 14 25 20 6 4 15 4 20-2l21-21c8-8 12-19 11-29 0-5-3-10-7-13-3-2-7-4-10-8-28-28-28-74 0-102l67-67c28-28 75-28 103 1 28 28 27 74-1 102l-13 13c-4 4-6 10-4 16 6 17 9 35 10 53 0 14 17 21 27 11l37-37c59-59 59-155 0-214z"/></svg><div class="t" style="left:73.10px;top:1060.46px;font-size:15.52px;line-height:15.52px;color:#c2c7d0;transform:scaleX(0.9508);transform-origin:0 0;">Affiliate</div><svg class="ic" style="left:45.4px;top:1100.8px;width:17.2px;height:17.2px;" viewBox="0 0 512 512" preserveAspectRatio="none" fill="#c2c7d0"><path d="M0 405v43c0 35 86 64 192 64s192-29 192-64v-43c-41 29-117 43-192 43S41 434 0 405zM320 128c106 0 192-29 192-64S426 0 320 0 128 29 128 64s86 64 192 64zM0 300v51c0 35 86 64 192 64s192-29 192-64v-51c-41 34-117 51-192 51S41 334 0 300zm416 11c57-11 96-32 96-56v-43c-23 16-57 27-96 34v65zM192 160C86 160 0 196 0 240s86 80 192 80 192-36 192-80-86-80-192-80zm219 56c60-11 101-32 101-56v-43c-36 25-97 39-161 42 29 14 51 34 60 57z"/></svg><div class="t" style="left:72.36px;top:1103.66px;font-size:15.52px;line-height:15.52px;color:#c2c7d0;transform:scaleX(0.9564);transform-origin:0 0;">Currencies</div><div class="r" style="left:209.8px;top:1101.4px;width:16.2px;height:18px;background:#17a2b8;border-radius:4px;"></div><div class="t" style="left:-782.09px;width:2000px;text-align:center;top:1104.95px;font-size:11.64px;line-height:11.64px;color:#fff;font-weight:700;transform:scaleX(1.0373);transform-origin:1000px 0;">7</div><svg class="ic" style="left:45.4px;top:1144.0px;width:17.2px;height:17.2px;" viewBox="0 0 512 512" preserveAspectRatio="none" fill="#c2c7d0"><path d="M0 168v-16c0-13 11-24 24-24h360V80c0-21 26-32 41-17l80 80c9 9 9 25 0 34l-80 80c-15 15-41 4-41-17v-48H24c-13 0-24-11-24-24zm488 152H128v-48c0-21-26-32-41-17l-80 80c-9 9-9 25 0 34l80 80c15 15 41 4 41-17v-48h360c13 0 24-11 24-24v-16c0-13-11-24-24-24z"/></svg><div class="t" style="left:71.96px;top:1146.86px;font-size:15.52px;line-height:15.52px;color:#c2c7d0;transform:scaleX(0.9159);transform-origin:0 0;">Exchange Rates</div><div class="r" style="left:209.8px;top:1144.6px;width:16.2px;height:18px;background:#17a2b8;border-radius:4px;"></div><div class="t" style="left:-782.31px;width:2000px;text-align:center;top:1148.15px;font-size:11.64px;line-height:11.64px;color:#fff;font-weight:700;transform:scaleX(1.0484);transform-origin:1000px 0;">1</div><svg class="ic" style="left:45.4px;top:1187.2px;width:17.2px;height:17.2px;" viewBox="0 0 512 512" preserveAspectRatio="none" fill="#c2c7d0"><path d="M496 128v16c0 4-4 8-8 8h-24v12c0 7-5 12-12 12H60c-7 0-12-5-12-12v-12H24c-4 0-8-4-8-8v-16c0-3 2-6 5-7L251 33c3-1 7-1 10 0l230 88c3 1 5 4 5 7zm-24 328H40c-13 0-24 11-24 24v16c0 4 4 8 8 8h464c4 0 8-4 8-8v-16c0-13-11-24-24-24zM96 192v192H60c-7 0-12 5-12 12v20h416v-20c0-7-5-12-12-12h-36V192h-64v192h-64V192h-64v192h-64V192H96z"/></svg><div class="t" style="left:71.90px;top:1190.06px;font-size:15.52px;line-height:15.52px;color:#c2c7d0;transform:scaleX(0.9668);transform-origin:0 0;">Banks</div><svg class="ic" style="left:44.33px;top:1230.4px;width:19.35px;height:17.2px;" viewBox="0 0 576 512" preserveAspectRatio="none" fill="#c2c7d0"><path d="M0 432c0 27 21 48 48 48h480c27 0 48-21 48-48V256H0v176zm192-68c0-7 5-12 12-12h136c7 0 12 5 12 12v40c0 7-5 12-12 12H204c-7 0-12-5-12-12v-40zm-128 0c0-7 5-12 12-12h72c7 0 12 5 12 12v40c0 7-5 12-12 12H76c-7 0-12-5-12-12v-40zM576 80v48H0V80c0-27 21-48 48-48h480c27 0 48 21 48 48z"/></svg><div class="t" style="left:71.92px;top:1233.26px;font-size:15.52px;line-height:15.52px;color:#c2c7d0;transform:scaleX(0.9498);transform-origin:0 0;">Payment Services</div><div class="r" style="left:209.8px;top:1231.0px;width:16.2px;height:18px;background:#17a2b8;border-radius:4px;"></div><div class="t" style="left:-782.09px;width:2000px;text-align:center;top:1234.55px;font-size:11.64px;line-height:11.64px;color:#fff;font-weight:700;transform:scaleX(1.0373);transform-origin:1000px 0;">0</div><svg class="ic" style="left:47.55px;top:1273.6px;width:12.9px;height:17.2px;" viewBox="0 0 384 512" preserveAspectRatio="none" fill="#c2c7d0"><path d="M377 105L279 7c-4-4-11-7-17-7h-6v128h128v-6c0-6-3-12-7-17zM224 136V0H24C11 0 0 11 0 24v464c0 13 11 24 24 24h336c13 0 24-11 24-24V160H248c-13 0-24-11-24-24z"/></svg><div class="t" style="left:71.92px;top:1276.46px;font-size:15.52px;line-height:15.52px;color:#c2c7d0;transform:scaleX(0.9484);transform-origin:0 0;">Delivery Services</div><div class="r" style="left:209.8px;top:1274.2px;width:16.2px;height:18px;background:#17a2b8;border-radius:4px;"></div><div class="t" style="left:-782.09px;width:2000px;text-align:center;top:1277.75px;font-size:11.64px;line-height:11.64px;color:#fff;font-weight:700;transform:scaleX(1.0373);transform-origin:1000px 0;">0</div></div><div class="r" style="left:268px;top:226px;width:2256px;height:129px;background:transparent;border:5px solid #ed1c24;z-index:20"></div><div class="r" style="left:4px;top:741px;width:247px;height:180px;background:transparent;border:5px solid #ed1c24;z-index:20"></div><div class="t" style="left:-826.37px;width:2000px;text-align:center;top:704.70px;font-size:33.2px;line-height:33.2px;color:#ed1c24;font-weight:700;transform:scaleX(0.6665);transform-origin:1000px 0;z-index:20">1</div><div class="t" style="left:-154.10px;width:2000px;text-align:center;top:180.70px;font-size:33.2px;line-height:33.2px;color:#ed1c24;font-weight:700;transform:scaleX(0.9789);transform-origin:1000px 0;z-index:20">2</div><div class="r" style="left:2537px;top:0px;width:15px;height:1280px;background:#fafafa;"></div><svg class="ic" style="left:2540px;top:8px;width:9px;height:7px" viewBox="0 0 9 7"><path d="M4.5 0.5 L8.6 6.6 L0.4 6.6Z" fill="#8a8a8a"/></svg><div class="r" style="left:2540px;top:23px;width:9px;height:397px;background:#8a8a8a;border-radius:4.5px;"></div><svg class="ic" style="left:2540px;top:1264px;width:9px;height:7px" viewBox="0 0 9 7"><path d="M0.4 0.4 L8.6 0.4 L4.5 6.5Z" fill="#8a8a8a"/></svg><svg class="ic" style="left:0;top:0;width:8px;height:8px;z-index:30" viewBox="0 0 8 8"><path d="M0 0H7A7 7 0 0 0 0 7Z" fill="#3f5068"/></svg><svg class="ic" style="left:2544px;top:0;width:8px;height:8px;z-index:30" viewBox="0 0 8 8"><path d="M8 0H1A7 7 0 0 1 8 7Z" fill="#3f5068"/></svg><svg class="ic" style="left:0;top:1272px;width:8px;height:8px;z-index:30" viewBox="0 0 8 8"><path d="M0 8H7A7 7 0 0 1 0 1Z" fill="#3f5068"/></svg><svg class="ic" style="left:2544px;top:1272px;width:8px;height:8px;z-index:30" viewBox="0 0 8 8"><path d="M8 8H1A7 7 0 0 0 8 1Z" fill="#3f5068"/></svg></body></html>
